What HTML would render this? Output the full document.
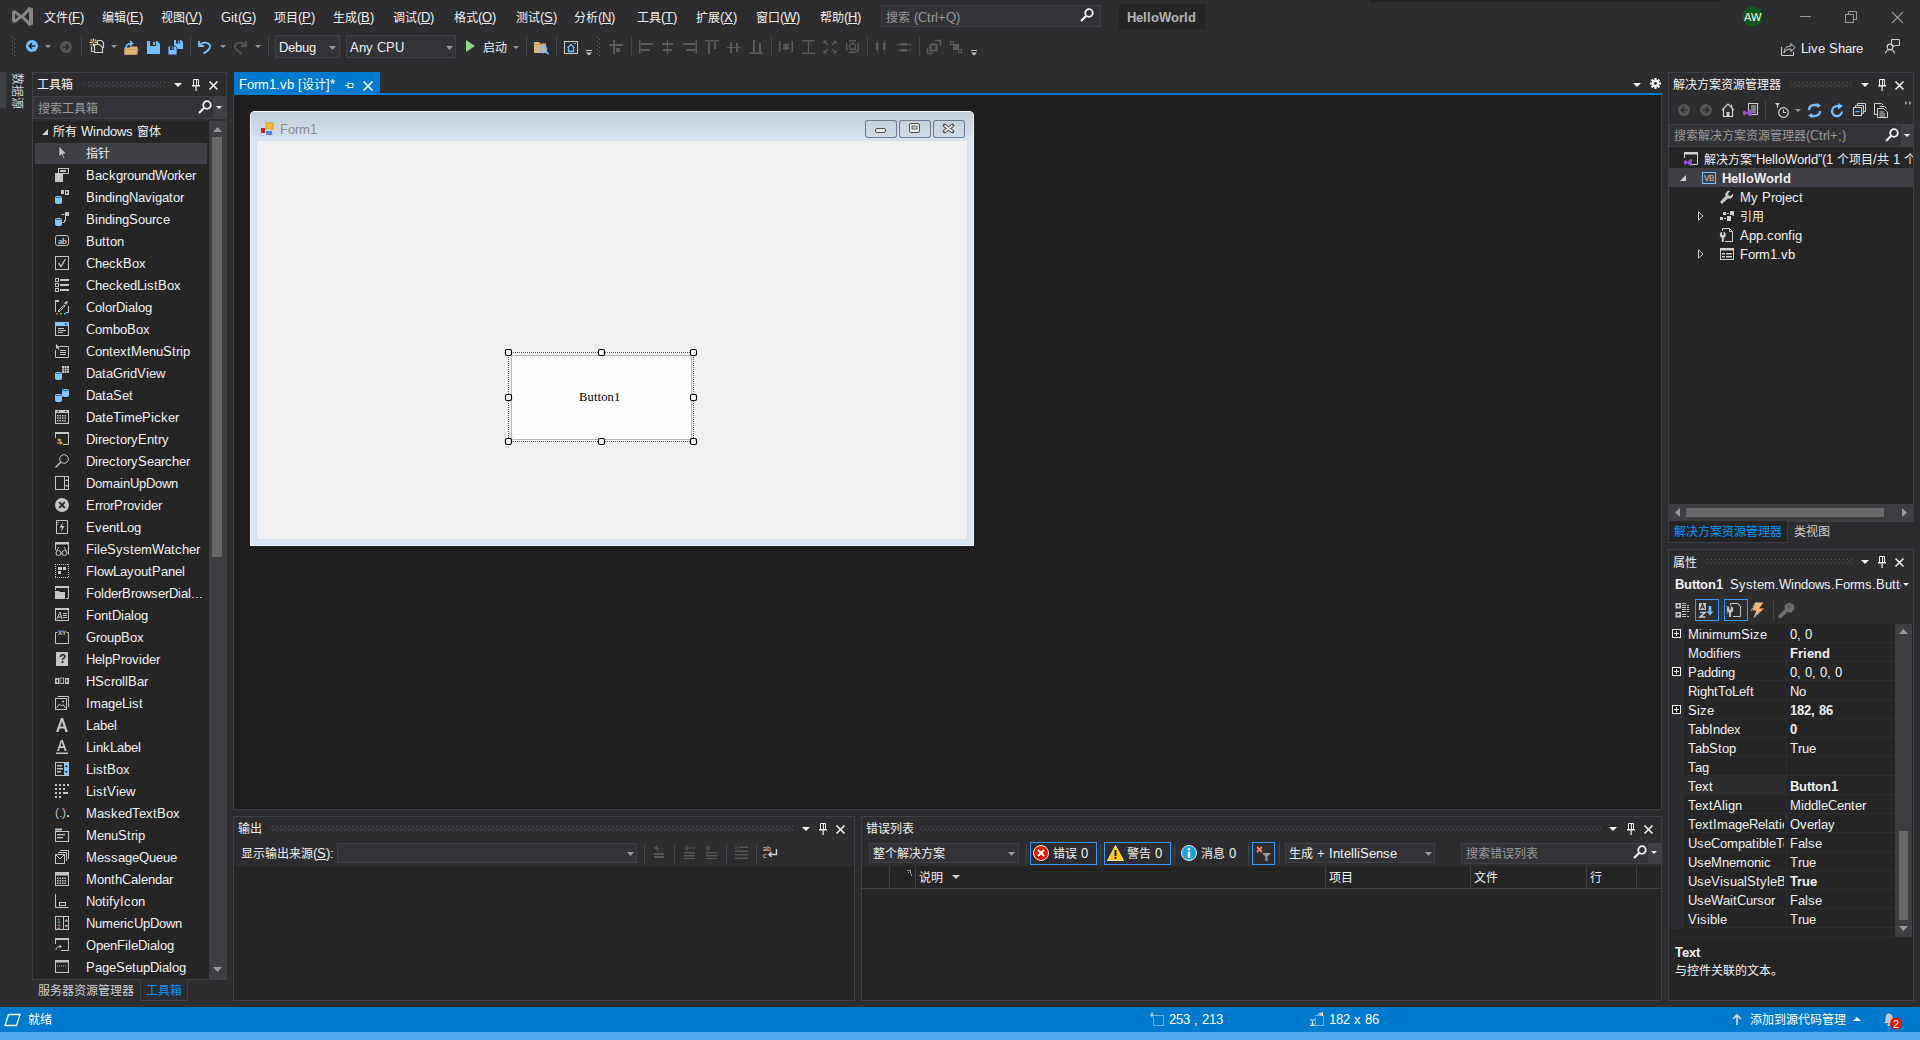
<!DOCTYPE html><html lang="zh-CN"><head><meta charset="utf-8"><style>
@font-face{font-family:"Liberation Sans";src:local("Liberation Sans"),local("LiberationSans");size-adjust:107%}
@font-face{font-family:"Liberation Sans";src:local("Liberation Sans Bold"),local("LiberationSans-Bold");font-weight:700;size-adjust:107%}
html,body{margin:0;padding:0;width:1920px;height:1040px;overflow:hidden;background:#2d2d30}
body{position:relative;font-family:"Liberation Sans",sans-serif;font-size:12px;color:#f1f1f1}
.a{position:absolute}
.t{position:absolute;white-space:pre;line-height:16px}
svg{overflow:visible}
</style></head><body><svg class="a" style="left:12px;top:6px;" width="21" height="21" viewBox="0 0 21 21"><path d="M0 5.5 L3 4 L9.5 9 L17 1 L21 2.5 L21 18.5 L17 20 L9.5 12 L3 17 L0 15.5 Z M3 7.5 L3 13.5 L6.5 10.5 Z M17 6 L12 10.5 L17 15 Z" fill="#868686" fill-rule="evenodd"/></svg>
<div class="t" style="left:44px;top:10px;color:#f1f1f1;">文件(<u>F</u>)</div>
<div class="t" style="left:102px;top:10px;color:#f1f1f1;">编辑(<u>E</u>)</div>
<div class="t" style="left:161px;top:10px;color:#f1f1f1;">视图(<u>V</u>)</div>
<div class="t" style="left:221px;top:10px;color:#f1f1f1;">Git(<u>G</u>)</div>
<div class="t" style="left:274px;top:10px;color:#f1f1f1;">项目(<u>P</u>)</div>
<div class="t" style="left:333px;top:10px;color:#f1f1f1;">生成(<u>B</u>)</div>
<div class="t" style="left:393px;top:10px;color:#f1f1f1;">调试(<u>D</u>)</div>
<div class="t" style="left:454px;top:10px;color:#f1f1f1;">格式(<u>O</u>)</div>
<div class="t" style="left:516px;top:10px;color:#f1f1f1;">测试(<u>S</u>)</div>
<div class="t" style="left:574px;top:10px;color:#f1f1f1;">分析(<u>N</u>)</div>
<div class="t" style="left:637px;top:10px;color:#f1f1f1;">工具(<u>T</u>)</div>
<div class="t" style="left:696px;top:10px;color:#f1f1f1;">扩展(<u>X</u>)</div>
<div class="t" style="left:756px;top:10px;color:#f1f1f1;">窗口(<u>W</u>)</div>
<div class="t" style="left:820px;top:10px;color:#f1f1f1;">帮助(<u>H</u>)</div>
<div class="a" style="left:881px;top:5px;width:220px;height:22px;background:#333337;box-shadow:inset 0 0 0 1px #3f3f46;"></div>
<div class="t" style="left:886px;top:10px;color:#999999;">搜索 (Ctrl+Q)</div>
<div class="a" style="left:1119px;top:4px;width:87px;height:26px;background:#252526;"></div>
<div class="t" style="left:1127px;top:10px;color:#b4b4b4;font-weight:700;">HelloWorld</div>
<svg class="a" style="left:1742px;top:6px;" width="21" height="21" viewBox="0 0 21 21"><circle cx="10.5" cy="10.5" r="10" fill="#0e5a1e"/><text x="10.5" y="15" font-family="Liberation Sans" font-size="10" fill="#fff" text-anchor="middle">AW</text></svg>
<svg class="a" style="left:1800px;top:16px;" width="11" height="1" viewBox="0 0 11 1"><rect width="11" height="1" fill="#999"/></svg>
<svg class="a" style="left:1845px;top:11px;" width="12" height="12" viewBox="0 0 12 12"><rect x="0.5" y="3.5" width="8" height="8" fill="none" stroke="#999"/><path d="M3.5 3.5 V0.5 H11.5 V8.5 H8.5" fill="none" stroke="#999"/></svg>
<svg class="a" style="left:1892px;top:12px;" width="11" height="11" viewBox="0 0 11 11"><path d="M0 0 L11 11 M11 0 L0 11" stroke="#999" stroke-width="1.1"/></svg>
<svg class="a" style="left:12px;top:37px;" width="4" height="20" viewBox="0 0 4 20"><rect x="0" y="0" width="1" height="1" fill="#6a6a6a"/><rect x="2" y="2" width="1" height="1" fill="#6a6a6a"/><rect x="0" y="4" width="1" height="1" fill="#6a6a6a"/><rect x="2" y="6" width="1" height="1" fill="#6a6a6a"/><rect x="0" y="8" width="1" height="1" fill="#6a6a6a"/><rect x="2" y="10" width="1" height="1" fill="#6a6a6a"/><rect x="0" y="12" width="1" height="1" fill="#6a6a6a"/><rect x="2" y="14" width="1" height="1" fill="#6a6a6a"/><rect x="0" y="16" width="1" height="1" fill="#6a6a6a"/><rect x="2" y="18" width="1" height="1" fill="#6a6a6a"/></svg>
<div class="a" style="left:275px;top:35px;width:65px;height:23px;background:#333337;box-shadow:inset 0 0 0 1px #3f3f46;"></div>
<div class="t" style="left:279px;top:40px;color:#f1f1f1;">Debug</div>
<svg class="a" style="left:329px;top:46px;" width="7" height="4" viewBox="0 0 7 4"><path d="M0 0H7L3.5 4Z" fill="#999"/></svg>
<div class="a" style="left:346px;top:35px;width:110px;height:23px;background:#333337;box-shadow:inset 0 0 0 1px #3f3f46;"></div>
<div class="t" style="left:350px;top:40px;color:#f1f1f1;">Any CPU</div>
<svg class="a" style="left:446px;top:46px;" width="7" height="4" viewBox="0 0 7 4"><path d="M0 0H7L3.5 4Z" fill="#999"/></svg>
<svg class="a" style="left:466px;top:40px;" width="9" height="12" viewBox="0 0 9 12"><path d="M0 0L9 6L0 12Z" fill="#8dd28a"/></svg>
<div class="t" style="left:483px;top:40px;color:#f1f1f1;">启动</div>
<svg class="a" style="left:513px;top:46px;" width="6" height="3" viewBox="0 0 6 3"><path d="M0 0H6L3 3Z" fill="#999"/></svg>
<div class="t" style="left:1801px;top:41px;color:#f1f1f1;">Live Share</div>
<div class="a" style="left:0px;top:72px;width:6px;height:36px;background:#3f3f46;"></div>
<div class="t" style="left:11px;top:73px;color:#d0d0d0;writing-mode:vertical-rl;text-orientation:sideways;line-height:12px">数据源</div>
<div class="a" style="left:32px;top:72px;width:195px;height:908px;box-shadow:inset 0 0 0 1px #3f3f46;"></div>
<div class="t" style="left:37px;top:77px;color:#f1f1f1;">工具箱</div>
<div class="a" style="left:33px;top:96px;width:193px;height:23px;background:#333337;box-shadow:inset 0 0 0 1px #3f3f46;"></div>
<div class="a" style="left:213px;top:97px;width:13px;height:21px;background:#3f3f46;"></div>
<div class="t" style="left:38px;top:101px;color:#999999;">搜索工具箱</div>
<div class="a" style="left:33px;top:121px;width:176px;height:858px;background:#252526;"></div>
<div class="a" style="left:209px;top:121px;width:17px;height:858px;background:#3e3e42;"></div>
<div class="a" style="left:212px;top:137px;width:10px;height:420px;background:#686868;"></div>
<div class="t" style="left:53px;top:124px;color:#f1f1f1;">所有 Windows 窗体</div>
<div class="a" style="left:35px;top:143px;width:172px;height:21px;background:#3f3f46;"></div>
<div class="t" style="left:86px;top:146px;color:#f1f1f1;">指针</div>
<div class="t" style="left:86px;top:168px;color:#f1f1f1;">BackgroundWorker</div>
<div class="t" style="left:86px;top:190px;color:#f1f1f1;">BindingNavigator</div>
<div class="t" style="left:86px;top:212px;color:#f1f1f1;">BindingSource</div>
<div class="t" style="left:86px;top:234px;color:#f1f1f1;">Button</div>
<div class="t" style="left:86px;top:256px;color:#f1f1f1;">CheckBox</div>
<div class="t" style="left:86px;top:278px;color:#f1f1f1;">CheckedListBox</div>
<div class="t" style="left:86px;top:300px;color:#f1f1f1;">ColorDialog</div>
<div class="t" style="left:86px;top:322px;color:#f1f1f1;">ComboBox</div>
<div class="t" style="left:86px;top:344px;color:#f1f1f1;">ContextMenuStrip</div>
<div class="t" style="left:86px;top:366px;color:#f1f1f1;">DataGridView</div>
<div class="t" style="left:86px;top:388px;color:#f1f1f1;">DataSet</div>
<div class="t" style="left:86px;top:410px;color:#f1f1f1;">DateTimePicker</div>
<div class="t" style="left:86px;top:432px;color:#f1f1f1;">DirectoryEntry</div>
<div class="t" style="left:86px;top:454px;color:#f1f1f1;">DirectorySearcher</div>
<div class="t" style="left:86px;top:476px;color:#f1f1f1;">DomainUpDown</div>
<div class="t" style="left:86px;top:498px;color:#f1f1f1;">ErrorProvider</div>
<div class="t" style="left:86px;top:520px;color:#f1f1f1;">EventLog</div>
<div class="t" style="left:86px;top:542px;color:#f1f1f1;">FileSystemWatcher</div>
<div class="t" style="left:86px;top:564px;color:#f1f1f1;">FlowLayoutPanel</div>
<div class="t" style="left:86px;top:586px;color:#f1f1f1;">FolderBrowserDial...</div>
<div class="t" style="left:86px;top:608px;color:#f1f1f1;">FontDialog</div>
<div class="t" style="left:86px;top:630px;color:#f1f1f1;">GroupBox</div>
<div class="t" style="left:86px;top:652px;color:#f1f1f1;">HelpProvider</div>
<div class="t" style="left:86px;top:674px;color:#f1f1f1;">HScrollBar</div>
<div class="t" style="left:86px;top:696px;color:#f1f1f1;">ImageList</div>
<div class="t" style="left:86px;top:718px;color:#f1f1f1;">Label</div>
<div class="t" style="left:86px;top:740px;color:#f1f1f1;">LinkLabel</div>
<div class="t" style="left:86px;top:762px;color:#f1f1f1;">ListBox</div>
<div class="t" style="left:86px;top:784px;color:#f1f1f1;">ListView</div>
<div class="t" style="left:86px;top:806px;color:#f1f1f1;">MaskedTextBox</div>
<div class="t" style="left:86px;top:828px;color:#f1f1f1;">MenuStrip</div>
<div class="t" style="left:86px;top:850px;color:#f1f1f1;">MessageQueue</div>
<div class="t" style="left:86px;top:872px;color:#f1f1f1;">MonthCalendar</div>
<div class="t" style="left:86px;top:894px;color:#f1f1f1;">NotifyIcon</div>
<div class="t" style="left:86px;top:916px;color:#f1f1f1;">NumericUpDown</div>
<div class="t" style="left:86px;top:938px;color:#f1f1f1;">OpenFileDialog</div>
<div class="t" style="left:86px;top:960px;color:#f1f1f1;">PageSetupDialog</div>
<div class="a" style="left:140px;top:979px;width:48px;height:22px;box-shadow:inset 0 0 0 1px #3f3f46;border-top:none"></div>
<div class="a" style="left:141px;top:979px;width:46px;height:21px;background:#2d2d30;"></div>
<div class="t" style="left:38px;top:983px;color:#d0d0d0;">服务器资源管理器</div>
<div class="t" style="left:146px;top:983px;color:#0097fb;">工具箱</div>
<div class="a" style="left:234px;top:72px;width:146px;height:23px;background:#007acc;"></div>
<div class="t" style="left:239px;top:77px;color:#ffffff;">Form1.vb [设计]*</div>
<div class="a" style="left:234px;top:93px;width:1428px;height:2px;background:#007acc;"></div>
<div class="a" style="left:233px;top:95px;width:1429px;height:715px;background:#3f3f46;"></div>
<div class="a" style="left:234px;top:95px;width:1427px;height:714px;background:#1e1e1e;"></div>
<div class="a" style="left:250px;top:111px;width:724px;height:435px;background:#d7e4f2;border-radius:5px 5px 0 0;box-shadow:inset 0 0 0 1px #f4f8fc;background:linear-gradient(#bfcddb,#d7e4f2 30px)"></div>
<div class="a" style="left:257px;top:141px;width:710px;height:398px;background:#f0f0f0;"></div>
<div class="t" style="left:280px;top:122px;color:#8b8b8b;">Form1</div>
<div class="a" style="left:865px;top:120px;width:32px;height:18px;box-shadow:inset 0 0 0 1px #6d7a90;border-radius:3px;background:linear-gradient(#c4d2e0,#d0dce8)"></div>
<div class="a" style="left:899px;top:120px;width:32px;height:18px;box-shadow:inset 0 0 0 1px #6d7a90;border-radius:3px;background:linear-gradient(#c4d2e0,#d0dce8)"></div>
<div class="a" style="left:933px;top:120px;width:32px;height:18px;box-shadow:inset 0 0 0 1px #6d7a90;border-radius:3px;background:linear-gradient(#c4d2e0,#d0dce8)"></div>
<div class="a" style="left:511px;top:355px;width:181px;height:85px;background:#fdfdfd;box-shadow:inset 0 0 0 1px #b9b9b9;border-radius:3px"></div>
<div class="t" style="left:579px;top:389px;color:#000;font-family:'Liberation Serif';font-size:12.5px;font-weight:400;letter-spacing:0.15px">Button1</div>
<div class="a" style="left:233px;top:816px;width:622px;height:185px;box-shadow:inset 0 0 0 1px #3f3f46;"></div>
<div class="t" style="left:238px;top:821px;color:#f1f1f1;">输出</div>
<div class="a" style="left:234px;top:839px;width:620px;height:1px;background:#2d2d30;"></div>
<div class="t" style="left:241px;top:846px;color:#f1f1f1;">显示输出来源(<u>S</u>):</div>
<div class="a" style="left:337px;top:843px;width:300px;height:20px;background:#333337;box-shadow:inset 0 0 0 1px #3f3f46;"></div>
<svg class="a" style="left:627px;top:852px;" width="7" height="4" viewBox="0 0 7 4"><path d="M0 0H7L3.5 4Z" fill="#999"/></svg>
<div class="a" style="left:234px;top:866px;width:620px;height:134px;background:#252526;"></div>
<div class="a" style="left:861px;top:816px;width:801px;height:185px;box-shadow:inset 0 0 0 1px #3f3f46;"></div>
<div class="t" style="left:866px;top:821px;color:#f1f1f1;">错误列表</div>
<div class="a" style="left:869px;top:843px;width:150px;height:20px;background:#333337;box-shadow:inset 0 0 0 1px #3f3f46;"></div>
<div class="t" style="left:873px;top:846px;color:#f1f1f1;">整个解决方案</div>
<svg class="a" style="left:1008px;top:852px;" width="7" height="4" viewBox="0 0 7 4"><path d="M0 0H7L3.5 4Z" fill="#999"/></svg>
<div class="a" style="left:1030px;top:842px;width:67px;height:23px;box-shadow:inset 0 0 0 1px #3399ff;"></div>
<div class="t" style="left:1053px;top:846px;color:#f1f1f1;">错误 0</div>
<div class="a" style="left:1104px;top:842px;width:67px;height:23px;box-shadow:inset 0 0 0 1px #3399ff;"></div>
<div class="t" style="left:1127px;top:846px;color:#f1f1f1;">警告 0</div>
<div class="t" style="left:1201px;top:846px;color:#f1f1f1;">消息 0</div>
<div class="a" style="left:1252px;top:842px;width:23px;height:23px;box-shadow:inset 0 0 0 1px #3399ff;"></div>
<div class="a" style="left:1285px;top:843px;width:150px;height:20px;background:#333337;box-shadow:inset 0 0 0 1px #3f3f46;"></div>
<div class="t" style="left:1289px;top:846px;color:#f1f1f1;">生成 + IntelliSense</div>
<svg class="a" style="left:1425px;top:852px;" width="7" height="4" viewBox="0 0 7 4"><path d="M0 0H7L3.5 4Z" fill="#999"/></svg>
<div class="a" style="left:1461px;top:843px;width:188px;height:21px;background:#333337;box-shadow:inset 0 0 0 1px #3f3f46;"></div>
<div class="a" style="left:1649px;top:843px;width:12px;height:21px;background:#3f3f46;"></div>
<div class="t" style="left:1466px;top:846px;color:#999999;">搜索错误列表</div>
<div class="a" style="left:862px;top:866px;width:799px;height:22px;background:#252526;"></div>
<div class="a" style="left:862px;top:888px;width:799px;height:1px;background:#3f3f46;"></div>
<div class="a" style="left:862px;top:889px;width:799px;height:111px;background:#252526;"></div>
<div class="a" style="left:889px;top:866px;width:1px;height:22px;background:#3f3f46;"></div>
<div class="a" style="left:915px;top:866px;width:1px;height:22px;background:#3f3f46;"></div>
<div class="a" style="left:1325px;top:866px;width:1px;height:22px;background:#3f3f46;"></div>
<div class="a" style="left:1470px;top:866px;width:1px;height:22px;background:#3f3f46;"></div>
<div class="a" style="left:1586px;top:866px;width:1px;height:22px;background:#3f3f46;"></div>
<div class="a" style="left:1636px;top:866px;width:1px;height:22px;background:#3f3f46;"></div>
<div class="t" style="left:919px;top:870px;color:#f1f1f1;">说明</div>
<div class="t" style="left:1329px;top:870px;color:#f1f1f1;">项目</div>
<div class="t" style="left:1474px;top:870px;color:#f1f1f1;">文件</div>
<div class="t" style="left:1590px;top:870px;color:#f1f1f1;">行</div>
<div class="a" style="left:1668px;top:72px;width:246px;height:450px;box-shadow:inset 0 0 0 1px #3f3f46;"></div>
<div class="t" style="left:1673px;top:77px;color:#f1f1f1;">解决方案资源管理器</div>
<div class="a" style="left:1669px;top:124px;width:245px;height:23px;background:#333337;box-shadow:inset 0 0 0 1px #3f3f46;"></div>
<div class="a" style="left:1901px;top:125px;width:12px;height:21px;background:#3f3f46;"></div>
<div class="t" style="left:1674px;top:128px;color:#999999;">搜索解决方案资源管理器(Ctrl+;)</div>
<div class="a" style="left:1669px;top:147px;width:244px;height:357px;background:#252526;"></div>
<div class="a" style="left:1669px;top:168px;width:244px;height:19px;background:#3f3f46;"></div>
<div class="t" style="left:1704px;top:152px;color:#f1f1f1;width:209px;overflow:hidden">解决方案“HelloWorld”(1 个项目/共 1 个)</div>
<div class="t" style="left:1722px;top:171px;color:#f1f1f1;font-weight:700;">HelloWorld</div>
<div class="t" style="left:1740px;top:190px;color:#f1f1f1;">My Project</div>
<div class="t" style="left:1740px;top:209px;color:#f1f1f1;">引用</div>
<div class="t" style="left:1740px;top:228px;color:#f1f1f1;">App.config</div>
<div class="t" style="left:1740px;top:247px;color:#f1f1f1;">Form1.vb</div>
<div class="a" style="left:1669px;top:504px;width:244px;height:17px;background:#3e3e42;"></div>
<div class="a" style="left:1686px;top:508px;width:198px;height:9px;background:#686868;"></div>
<div class="a" style="left:1668px;top:521px;width:120px;height:22px;background:#252526;box-shadow:inset 0 0 0 1px #3f3f46;"></div>
<div class="a" style="left:1669px;top:521px;width:118px;height:1px;background:#252526;"></div>
<div class="t" style="left:1674px;top:524px;color:#0097fb;">解决方案资源管理器</div>
<div class="t" style="left:1794px;top:524px;color:#d0d0d0;">类视图</div>
<div class="a" style="left:1668px;top:549px;width:246px;height:452px;box-shadow:inset 0 0 0 1px #3f3f46;"></div>
<div class="t" style="left:1673px;top:555px;color:#f1f1f1;">属性</div>
<div class="a" style="left:1669px;top:574px;width:244px;height:23px;background:#2d2d30;"></div>
<div class="t" style="left:1675px;top:577px;color:#f1f1f1;font-weight:700;">Button1</div>
<div class="t" style="left:1730px;top:577px;color:#f1f1f1;width:171px;overflow:hidden">System.Windows.Forms.Buttc</div>
<div class="a" style="left:1669px;top:624px;width:244px;height:314px;background:#252526;"></div>
<div class="a" style="left:1895px;top:624px;width:17px;height:313px;background:#3e3e42;"></div>
<div class="a" style="left:1899px;top:831px;width:9px;height:89px;background:#686868;"></div>
<div class="a" style="left:1684px;top:642px;width:211px;height:1px;background:#2d2d30;"></div>
<div class="a" style="left:1786px;top:624px;width:1px;height:19px;background:#2d2d30;"></div>
<div class="t" style="left:1688px;top:627px;color:#f1f1f1;width:96px;overflow:hidden">MinimumSize</div>
<div class="t" style="left:1790px;top:627px;color:#f1f1f1;">0, 0</div>
<div class="a" style="left:1684px;top:661px;width:211px;height:1px;background:#2d2d30;"></div>
<div class="a" style="left:1786px;top:643px;width:1px;height:19px;background:#2d2d30;"></div>
<div class="t" style="left:1688px;top:646px;color:#f1f1f1;width:96px;overflow:hidden">Modifiers</div>
<div class="t" style="left:1790px;top:646px;color:#f1f1f1;font-weight:700;">Friend</div>
<div class="a" style="left:1684px;top:680px;width:211px;height:1px;background:#2d2d30;"></div>
<div class="a" style="left:1786px;top:662px;width:1px;height:19px;background:#2d2d30;"></div>
<div class="t" style="left:1688px;top:665px;color:#f1f1f1;width:96px;overflow:hidden">Padding</div>
<div class="t" style="left:1790px;top:665px;color:#f1f1f1;">0, 0, 0, 0</div>
<div class="a" style="left:1684px;top:699px;width:211px;height:1px;background:#2d2d30;"></div>
<div class="a" style="left:1786px;top:681px;width:1px;height:19px;background:#2d2d30;"></div>
<div class="t" style="left:1688px;top:684px;color:#f1f1f1;width:96px;overflow:hidden">RightToLeft</div>
<div class="t" style="left:1790px;top:684px;color:#f1f1f1;">No</div>
<div class="a" style="left:1684px;top:718px;width:211px;height:1px;background:#2d2d30;"></div>
<div class="a" style="left:1786px;top:700px;width:1px;height:19px;background:#2d2d30;"></div>
<div class="t" style="left:1688px;top:703px;color:#f1f1f1;width:96px;overflow:hidden">Size</div>
<div class="t" style="left:1790px;top:703px;color:#f1f1f1;font-weight:700;">182, 86</div>
<div class="a" style="left:1684px;top:737px;width:211px;height:1px;background:#2d2d30;"></div>
<div class="a" style="left:1786px;top:719px;width:1px;height:19px;background:#2d2d30;"></div>
<div class="t" style="left:1688px;top:722px;color:#f1f1f1;width:96px;overflow:hidden">TabIndex</div>
<div class="t" style="left:1790px;top:722px;color:#f1f1f1;font-weight:700;">0</div>
<div class="a" style="left:1684px;top:756px;width:211px;height:1px;background:#2d2d30;"></div>
<div class="a" style="left:1786px;top:738px;width:1px;height:19px;background:#2d2d30;"></div>
<div class="t" style="left:1688px;top:741px;color:#f1f1f1;width:96px;overflow:hidden">TabStop</div>
<div class="t" style="left:1790px;top:741px;color:#f1f1f1;">True</div>
<div class="a" style="left:1684px;top:775px;width:211px;height:1px;background:#2d2d30;"></div>
<div class="a" style="left:1786px;top:757px;width:1px;height:19px;background:#2d2d30;"></div>
<div class="t" style="left:1688px;top:760px;color:#f1f1f1;width:96px;overflow:hidden">Tag</div>
<div class="t" style="left:1790px;top:760px;color:#f1f1f1;"></div>
<div class="a" style="left:1684px;top:794px;width:211px;height:1px;background:#2d2d30;"></div>
<div class="a" style="left:1684px;top:776px;width:102px;height:18px;background:#2d2d30;"></div>
<div class="a" style="left:1786px;top:776px;width:1px;height:19px;background:#2d2d30;"></div>
<div class="t" style="left:1688px;top:779px;color:#f1f1f1;width:96px;overflow:hidden">Text</div>
<div class="t" style="left:1790px;top:779px;color:#f1f1f1;font-weight:700;">Button1</div>
<div class="a" style="left:1684px;top:813px;width:211px;height:1px;background:#2d2d30;"></div>
<div class="a" style="left:1786px;top:795px;width:1px;height:19px;background:#2d2d30;"></div>
<div class="t" style="left:1688px;top:798px;color:#f1f1f1;width:96px;overflow:hidden">TextAlign</div>
<div class="t" style="left:1790px;top:798px;color:#f1f1f1;">MiddleCenter</div>
<div class="a" style="left:1684px;top:832px;width:211px;height:1px;background:#2d2d30;"></div>
<div class="a" style="left:1786px;top:814px;width:1px;height:19px;background:#2d2d30;"></div>
<div class="t" style="left:1688px;top:817px;color:#f1f1f1;width:96px;overflow:hidden">TextImageRelation</div>
<div class="t" style="left:1790px;top:817px;color:#f1f1f1;">Overlay</div>
<div class="a" style="left:1684px;top:851px;width:211px;height:1px;background:#2d2d30;"></div>
<div class="a" style="left:1786px;top:833px;width:1px;height:19px;background:#2d2d30;"></div>
<div class="t" style="left:1688px;top:836px;color:#f1f1f1;width:96px;overflow:hidden">UseCompatibleTextRendering</div>
<div class="t" style="left:1790px;top:836px;color:#f1f1f1;">False</div>
<div class="a" style="left:1684px;top:870px;width:211px;height:1px;background:#2d2d30;"></div>
<div class="a" style="left:1786px;top:852px;width:1px;height:19px;background:#2d2d30;"></div>
<div class="t" style="left:1688px;top:855px;color:#f1f1f1;width:96px;overflow:hidden">UseMnemonic</div>
<div class="t" style="left:1790px;top:855px;color:#f1f1f1;">True</div>
<div class="a" style="left:1684px;top:889px;width:211px;height:1px;background:#2d2d30;"></div>
<div class="a" style="left:1786px;top:871px;width:1px;height:19px;background:#2d2d30;"></div>
<div class="t" style="left:1688px;top:874px;color:#f1f1f1;width:96px;overflow:hidden">UseVisualStyleBackColor</div>
<div class="t" style="left:1790px;top:874px;color:#f1f1f1;font-weight:700;">True</div>
<div class="a" style="left:1684px;top:908px;width:211px;height:1px;background:#2d2d30;"></div>
<div class="a" style="left:1786px;top:890px;width:1px;height:19px;background:#2d2d30;"></div>
<div class="t" style="left:1688px;top:893px;color:#f1f1f1;width:96px;overflow:hidden">UseWaitCursor</div>
<div class="t" style="left:1790px;top:893px;color:#f1f1f1;">False</div>
<div class="a" style="left:1684px;top:927px;width:211px;height:1px;background:#2d2d30;"></div>
<div class="a" style="left:1786px;top:909px;width:1px;height:19px;background:#2d2d30;"></div>
<div class="t" style="left:1688px;top:912px;color:#f1f1f1;width:96px;overflow:hidden">Visible</div>
<div class="t" style="left:1790px;top:912px;color:#f1f1f1;">True</div>
<div class="a" style="left:1669px;top:937px;width:244px;height:1px;background:#2d2d30;"></div>
<div class="a" style="left:1669px;top:938px;width:244px;height:62px;background:#252526;"></div>
<div class="t" style="left:1675px;top:945px;color:#f1f1f1;font-weight:700;">Text</div>
<div class="t" style="left:1675px;top:963px;color:#f1f1f1;">与控件关联的文本。</div>
<div class="a" style="left:1370px;top:0px;width:350px;height:3px;background:linear-gradient(rgba(0,0,0,.35),rgba(0,0,0,0))"></div>
<div class="a" style="left:0px;top:1007px;width:1920px;height:25px;background:#007acc;"></div>
<div class="a" style="left:0px;top:1032px;width:1920px;height:8px;background:#4ea9ef;"></div>
<div class="t" style="left:28px;top:1012px;color:#fff;">就绪</div>
<div class="t" style="left:1169px;top:1012px;color:#fff;">253 , 213</div>
<div class="t" style="left:1329px;top:1012px;color:#fff;">182 x 86</div>
<div class="t" style="left:1750px;top:1012px;color:#fff;">添加到源代码管理</div>
<svg class="a" style="left:82px;top:82px;" width="84" height="5" viewBox="0 0 84 5"><rect x="2" y="0" width="1" height="1" fill="#5a5a5e"/><rect x="6" y="0" width="1" height="1" fill="#5a5a5e"/><rect x="10" y="0" width="1" height="1" fill="#5a5a5e"/><rect x="14" y="0" width="1" height="1" fill="#5a5a5e"/><rect x="18" y="0" width="1" height="1" fill="#5a5a5e"/><rect x="22" y="0" width="1" height="1" fill="#5a5a5e"/><rect x="26" y="0" width="1" height="1" fill="#5a5a5e"/><rect x="30" y="0" width="1" height="1" fill="#5a5a5e"/><rect x="34" y="0" width="1" height="1" fill="#5a5a5e"/><rect x="38" y="0" width="1" height="1" fill="#5a5a5e"/><rect x="42" y="0" width="1" height="1" fill="#5a5a5e"/><rect x="46" y="0" width="1" height="1" fill="#5a5a5e"/><rect x="50" y="0" width="1" height="1" fill="#5a5a5e"/><rect x="54" y="0" width="1" height="1" fill="#5a5a5e"/><rect x="58" y="0" width="1" height="1" fill="#5a5a5e"/><rect x="62" y="0" width="1" height="1" fill="#5a5a5e"/><rect x="66" y="0" width="1" height="1" fill="#5a5a5e"/><rect x="70" y="0" width="1" height="1" fill="#5a5a5e"/><rect x="74" y="0" width="1" height="1" fill="#5a5a5e"/><rect x="78" y="0" width="1" height="1" fill="#5a5a5e"/><rect x="82" y="0" width="1" height="1" fill="#5a5a5e"/><rect x="0" y="2" width="1" height="1" fill="#5a5a5e"/><rect x="4" y="2" width="1" height="1" fill="#5a5a5e"/><rect x="8" y="2" width="1" height="1" fill="#5a5a5e"/><rect x="12" y="2" width="1" height="1" fill="#5a5a5e"/><rect x="16" y="2" width="1" height="1" fill="#5a5a5e"/><rect x="20" y="2" width="1" height="1" fill="#5a5a5e"/><rect x="24" y="2" width="1" height="1" fill="#5a5a5e"/><rect x="28" y="2" width="1" height="1" fill="#5a5a5e"/><rect x="32" y="2" width="1" height="1" fill="#5a5a5e"/><rect x="36" y="2" width="1" height="1" fill="#5a5a5e"/><rect x="40" y="2" width="1" height="1" fill="#5a5a5e"/><rect x="44" y="2" width="1" height="1" fill="#5a5a5e"/><rect x="48" y="2" width="1" height="1" fill="#5a5a5e"/><rect x="52" y="2" width="1" height="1" fill="#5a5a5e"/><rect x="56" y="2" width="1" height="1" fill="#5a5a5e"/><rect x="60" y="2" width="1" height="1" fill="#5a5a5e"/><rect x="64" y="2" width="1" height="1" fill="#5a5a5e"/><rect x="68" y="2" width="1" height="1" fill="#5a5a5e"/><rect x="72" y="2" width="1" height="1" fill="#5a5a5e"/><rect x="76" y="2" width="1" height="1" fill="#5a5a5e"/><rect x="80" y="2" width="1" height="1" fill="#5a5a5e"/><rect x="2" y="4" width="1" height="1" fill="#5a5a5e"/><rect x="6" y="4" width="1" height="1" fill="#5a5a5e"/><rect x="10" y="4" width="1" height="1" fill="#5a5a5e"/><rect x="14" y="4" width="1" height="1" fill="#5a5a5e"/><rect x="18" y="4" width="1" height="1" fill="#5a5a5e"/><rect x="22" y="4" width="1" height="1" fill="#5a5a5e"/><rect x="26" y="4" width="1" height="1" fill="#5a5a5e"/><rect x="30" y="4" width="1" height="1" fill="#5a5a5e"/><rect x="34" y="4" width="1" height="1" fill="#5a5a5e"/><rect x="38" y="4" width="1" height="1" fill="#5a5a5e"/><rect x="42" y="4" width="1" height="1" fill="#5a5a5e"/><rect x="46" y="4" width="1" height="1" fill="#5a5a5e"/><rect x="50" y="4" width="1" height="1" fill="#5a5a5e"/><rect x="54" y="4" width="1" height="1" fill="#5a5a5e"/><rect x="58" y="4" width="1" height="1" fill="#5a5a5e"/><rect x="62" y="4" width="1" height="1" fill="#5a5a5e"/><rect x="66" y="4" width="1" height="1" fill="#5a5a5e"/><rect x="70" y="4" width="1" height="1" fill="#5a5a5e"/><rect x="74" y="4" width="1" height="1" fill="#5a5a5e"/><rect x="78" y="4" width="1" height="1" fill="#5a5a5e"/><rect x="82" y="4" width="1" height="1" fill="#5a5a5e"/></svg>
<svg class="a" style="left:174px;top:83px;" width="8" height="4" viewBox="0 0 8 4"><path d="M0 0H8L4.0 4.0Z" fill="#f1f1f1"/></svg>
<svg class="a" style="left:192px;top:79px;" width="8" height="12" viewBox="0 0 8 12"><path d="M1.5 0.5H6.5V6.5H1.5Z" fill="none" stroke="#f1f1f1"/><rect x="4" y="1" width="1" height="6" fill="#f1f1f1"/><rect x="0" y="6" width="8" height="1.5" fill="#f1f1f1"/><rect x="3.5" y="7" width="1.2" height="5" fill="#f1f1f1"/></svg>
<svg class="a" style="left:209px;top:81px;" width="9" height="9" viewBox="0 0 9 9"><path d="M0.5 0.5L8.5 8.5M8.5 0.5L0.5 8.5" stroke="#f1f1f1" stroke-width="1.6"/></svg>
<svg class="a" style="left:1789px;top:82px;" width="64" height="5" viewBox="0 0 64 5"><rect x="2" y="0" width="1" height="1" fill="#5a5a5e"/><rect x="6" y="0" width="1" height="1" fill="#5a5a5e"/><rect x="10" y="0" width="1" height="1" fill="#5a5a5e"/><rect x="14" y="0" width="1" height="1" fill="#5a5a5e"/><rect x="18" y="0" width="1" height="1" fill="#5a5a5e"/><rect x="22" y="0" width="1" height="1" fill="#5a5a5e"/><rect x="26" y="0" width="1" height="1" fill="#5a5a5e"/><rect x="30" y="0" width="1" height="1" fill="#5a5a5e"/><rect x="34" y="0" width="1" height="1" fill="#5a5a5e"/><rect x="38" y="0" width="1" height="1" fill="#5a5a5e"/><rect x="42" y="0" width="1" height="1" fill="#5a5a5e"/><rect x="46" y="0" width="1" height="1" fill="#5a5a5e"/><rect x="50" y="0" width="1" height="1" fill="#5a5a5e"/><rect x="54" y="0" width="1" height="1" fill="#5a5a5e"/><rect x="58" y="0" width="1" height="1" fill="#5a5a5e"/><rect x="62" y="0" width="1" height="1" fill="#5a5a5e"/><rect x="0" y="2" width="1" height="1" fill="#5a5a5e"/><rect x="4" y="2" width="1" height="1" fill="#5a5a5e"/><rect x="8" y="2" width="1" height="1" fill="#5a5a5e"/><rect x="12" y="2" width="1" height="1" fill="#5a5a5e"/><rect x="16" y="2" width="1" height="1" fill="#5a5a5e"/><rect x="20" y="2" width="1" height="1" fill="#5a5a5e"/><rect x="24" y="2" width="1" height="1" fill="#5a5a5e"/><rect x="28" y="2" width="1" height="1" fill="#5a5a5e"/><rect x="32" y="2" width="1" height="1" fill="#5a5a5e"/><rect x="36" y="2" width="1" height="1" fill="#5a5a5e"/><rect x="40" y="2" width="1" height="1" fill="#5a5a5e"/><rect x="44" y="2" width="1" height="1" fill="#5a5a5e"/><rect x="48" y="2" width="1" height="1" fill="#5a5a5e"/><rect x="52" y="2" width="1" height="1" fill="#5a5a5e"/><rect x="56" y="2" width="1" height="1" fill="#5a5a5e"/><rect x="60" y="2" width="1" height="1" fill="#5a5a5e"/><rect x="2" y="4" width="1" height="1" fill="#5a5a5e"/><rect x="6" y="4" width="1" height="1" fill="#5a5a5e"/><rect x="10" y="4" width="1" height="1" fill="#5a5a5e"/><rect x="14" y="4" width="1" height="1" fill="#5a5a5e"/><rect x="18" y="4" width="1" height="1" fill="#5a5a5e"/><rect x="22" y="4" width="1" height="1" fill="#5a5a5e"/><rect x="26" y="4" width="1" height="1" fill="#5a5a5e"/><rect x="30" y="4" width="1" height="1" fill="#5a5a5e"/><rect x="34" y="4" width="1" height="1" fill="#5a5a5e"/><rect x="38" y="4" width="1" height="1" fill="#5a5a5e"/><rect x="42" y="4" width="1" height="1" fill="#5a5a5e"/><rect x="46" y="4" width="1" height="1" fill="#5a5a5e"/><rect x="50" y="4" width="1" height="1" fill="#5a5a5e"/><rect x="54" y="4" width="1" height="1" fill="#5a5a5e"/><rect x="58" y="4" width="1" height="1" fill="#5a5a5e"/><rect x="62" y="4" width="1" height="1" fill="#5a5a5e"/></svg>
<svg class="a" style="left:1861px;top:83px;" width="8" height="4" viewBox="0 0 8 4"><path d="M0 0H8L4.0 4.0Z" fill="#f1f1f1"/></svg>
<svg class="a" style="left:1878px;top:79px;" width="8" height="12" viewBox="0 0 8 12"><path d="M1.5 0.5H6.5V6.5H1.5Z" fill="none" stroke="#f1f1f1"/><rect x="4" y="1" width="1" height="6" fill="#f1f1f1"/><rect x="0" y="6" width="8" height="1.5" fill="#f1f1f1"/><rect x="3.5" y="7" width="1.2" height="5" fill="#f1f1f1"/></svg>
<svg class="a" style="left:1895px;top:81px;" width="9" height="9" viewBox="0 0 9 9"><path d="M0.5 0.5L8.5 8.5M8.5 0.5L0.5 8.5" stroke="#f1f1f1" stroke-width="1.6"/></svg>
<svg class="a" style="left:1705px;top:559px;" width="148" height="5" viewBox="0 0 148 5"><rect x="2" y="0" width="1" height="1" fill="#5a5a5e"/><rect x="6" y="0" width="1" height="1" fill="#5a5a5e"/><rect x="10" y="0" width="1" height="1" fill="#5a5a5e"/><rect x="14" y="0" width="1" height="1" fill="#5a5a5e"/><rect x="18" y="0" width="1" height="1" fill="#5a5a5e"/><rect x="22" y="0" width="1" height="1" fill="#5a5a5e"/><rect x="26" y="0" width="1" height="1" fill="#5a5a5e"/><rect x="30" y="0" width="1" height="1" fill="#5a5a5e"/><rect x="34" y="0" width="1" height="1" fill="#5a5a5e"/><rect x="38" y="0" width="1" height="1" fill="#5a5a5e"/><rect x="42" y="0" width="1" height="1" fill="#5a5a5e"/><rect x="46" y="0" width="1" height="1" fill="#5a5a5e"/><rect x="50" y="0" width="1" height="1" fill="#5a5a5e"/><rect x="54" y="0" width="1" height="1" fill="#5a5a5e"/><rect x="58" y="0" width="1" height="1" fill="#5a5a5e"/><rect x="62" y="0" width="1" height="1" fill="#5a5a5e"/><rect x="66" y="0" width="1" height="1" fill="#5a5a5e"/><rect x="70" y="0" width="1" height="1" fill="#5a5a5e"/><rect x="74" y="0" width="1" height="1" fill="#5a5a5e"/><rect x="78" y="0" width="1" height="1" fill="#5a5a5e"/><rect x="82" y="0" width="1" height="1" fill="#5a5a5e"/><rect x="86" y="0" width="1" height="1" fill="#5a5a5e"/><rect x="90" y="0" width="1" height="1" fill="#5a5a5e"/><rect x="94" y="0" width="1" height="1" fill="#5a5a5e"/><rect x="98" y="0" width="1" height="1" fill="#5a5a5e"/><rect x="102" y="0" width="1" height="1" fill="#5a5a5e"/><rect x="106" y="0" width="1" height="1" fill="#5a5a5e"/><rect x="110" y="0" width="1" height="1" fill="#5a5a5e"/><rect x="114" y="0" width="1" height="1" fill="#5a5a5e"/><rect x="118" y="0" width="1" height="1" fill="#5a5a5e"/><rect x="122" y="0" width="1" height="1" fill="#5a5a5e"/><rect x="126" y="0" width="1" height="1" fill="#5a5a5e"/><rect x="130" y="0" width="1" height="1" fill="#5a5a5e"/><rect x="134" y="0" width="1" height="1" fill="#5a5a5e"/><rect x="138" y="0" width="1" height="1" fill="#5a5a5e"/><rect x="142" y="0" width="1" height="1" fill="#5a5a5e"/><rect x="146" y="0" width="1" height="1" fill="#5a5a5e"/><rect x="0" y="2" width="1" height="1" fill="#5a5a5e"/><rect x="4" y="2" width="1" height="1" fill="#5a5a5e"/><rect x="8" y="2" width="1" height="1" fill="#5a5a5e"/><rect x="12" y="2" width="1" height="1" fill="#5a5a5e"/><rect x="16" y="2" width="1" height="1" fill="#5a5a5e"/><rect x="20" y="2" width="1" height="1" fill="#5a5a5e"/><rect x="24" y="2" width="1" height="1" fill="#5a5a5e"/><rect x="28" y="2" width="1" height="1" fill="#5a5a5e"/><rect x="32" y="2" width="1" height="1" fill="#5a5a5e"/><rect x="36" y="2" width="1" height="1" fill="#5a5a5e"/><rect x="40" y="2" width="1" height="1" fill="#5a5a5e"/><rect x="44" y="2" width="1" height="1" fill="#5a5a5e"/><rect x="48" y="2" width="1" height="1" fill="#5a5a5e"/><rect x="52" y="2" width="1" height="1" fill="#5a5a5e"/><rect x="56" y="2" width="1" height="1" fill="#5a5a5e"/><rect x="60" y="2" width="1" height="1" fill="#5a5a5e"/><rect x="64" y="2" width="1" height="1" fill="#5a5a5e"/><rect x="68" y="2" width="1" height="1" fill="#5a5a5e"/><rect x="72" y="2" width="1" height="1" fill="#5a5a5e"/><rect x="76" y="2" width="1" height="1" fill="#5a5a5e"/><rect x="80" y="2" width="1" height="1" fill="#5a5a5e"/><rect x="84" y="2" width="1" height="1" fill="#5a5a5e"/><rect x="88" y="2" width="1" height="1" fill="#5a5a5e"/><rect x="92" y="2" width="1" height="1" fill="#5a5a5e"/><rect x="96" y="2" width="1" height="1" fill="#5a5a5e"/><rect x="100" y="2" width="1" height="1" fill="#5a5a5e"/><rect x="104" y="2" width="1" height="1" fill="#5a5a5e"/><rect x="108" y="2" width="1" height="1" fill="#5a5a5e"/><rect x="112" y="2" width="1" height="1" fill="#5a5a5e"/><rect x="116" y="2" width="1" height="1" fill="#5a5a5e"/><rect x="120" y="2" width="1" height="1" fill="#5a5a5e"/><rect x="124" y="2" width="1" height="1" fill="#5a5a5e"/><rect x="128" y="2" width="1" height="1" fill="#5a5a5e"/><rect x="132" y="2" width="1" height="1" fill="#5a5a5e"/><rect x="136" y="2" width="1" height="1" fill="#5a5a5e"/><rect x="140" y="2" width="1" height="1" fill="#5a5a5e"/><rect x="144" y="2" width="1" height="1" fill="#5a5a5e"/><rect x="2" y="4" width="1" height="1" fill="#5a5a5e"/><rect x="6" y="4" width="1" height="1" fill="#5a5a5e"/><rect x="10" y="4" width="1" height="1" fill="#5a5a5e"/><rect x="14" y="4" width="1" height="1" fill="#5a5a5e"/><rect x="18" y="4" width="1" height="1" fill="#5a5a5e"/><rect x="22" y="4" width="1" height="1" fill="#5a5a5e"/><rect x="26" y="4" width="1" height="1" fill="#5a5a5e"/><rect x="30" y="4" width="1" height="1" fill="#5a5a5e"/><rect x="34" y="4" width="1" height="1" fill="#5a5a5e"/><rect x="38" y="4" width="1" height="1" fill="#5a5a5e"/><rect x="42" y="4" width="1" height="1" fill="#5a5a5e"/><rect x="46" y="4" width="1" height="1" fill="#5a5a5e"/><rect x="50" y="4" width="1" height="1" fill="#5a5a5e"/><rect x="54" y="4" width="1" height="1" fill="#5a5a5e"/><rect x="58" y="4" width="1" height="1" fill="#5a5a5e"/><rect x="62" y="4" width="1" height="1" fill="#5a5a5e"/><rect x="66" y="4" width="1" height="1" fill="#5a5a5e"/><rect x="70" y="4" width="1" height="1" fill="#5a5a5e"/><rect x="74" y="4" width="1" height="1" fill="#5a5a5e"/><rect x="78" y="4" width="1" height="1" fill="#5a5a5e"/><rect x="82" y="4" width="1" height="1" fill="#5a5a5e"/><rect x="86" y="4" width="1" height="1" fill="#5a5a5e"/><rect x="90" y="4" width="1" height="1" fill="#5a5a5e"/><rect x="94" y="4" width="1" height="1" fill="#5a5a5e"/><rect x="98" y="4" width="1" height="1" fill="#5a5a5e"/><rect x="102" y="4" width="1" height="1" fill="#5a5a5e"/><rect x="106" y="4" width="1" height="1" fill="#5a5a5e"/><rect x="110" y="4" width="1" height="1" fill="#5a5a5e"/><rect x="114" y="4" width="1" height="1" fill="#5a5a5e"/><rect x="118" y="4" width="1" height="1" fill="#5a5a5e"/><rect x="122" y="4" width="1" height="1" fill="#5a5a5e"/><rect x="126" y="4" width="1" height="1" fill="#5a5a5e"/><rect x="130" y="4" width="1" height="1" fill="#5a5a5e"/><rect x="134" y="4" width="1" height="1" fill="#5a5a5e"/><rect x="138" y="4" width="1" height="1" fill="#5a5a5e"/><rect x="142" y="4" width="1" height="1" fill="#5a5a5e"/><rect x="146" y="4" width="1" height="1" fill="#5a5a5e"/></svg>
<svg class="a" style="left:1861px;top:560px;" width="8" height="4" viewBox="0 0 8 4"><path d="M0 0H8L4.0 4.0Z" fill="#f1f1f1"/></svg>
<svg class="a" style="left:1878px;top:556px;" width="8" height="12" viewBox="0 0 8 12"><path d="M1.5 0.5H6.5V6.5H1.5Z" fill="none" stroke="#f1f1f1"/><rect x="4" y="1" width="1" height="6" fill="#f1f1f1"/><rect x="0" y="6" width="8" height="1.5" fill="#f1f1f1"/><rect x="3.5" y="7" width="1.2" height="5" fill="#f1f1f1"/></svg>
<svg class="a" style="left:1895px;top:558px;" width="9" height="9" viewBox="0 0 9 9"><path d="M0.5 0.5L8.5 8.5M8.5 0.5L0.5 8.5" stroke="#f1f1f1" stroke-width="1.6"/></svg>
<svg class="a" style="left:270px;top:826px;" width="524" height="5" viewBox="0 0 524 5"><rect x="2" y="0" width="1" height="1" fill="#5a5a5e"/><rect x="6" y="0" width="1" height="1" fill="#5a5a5e"/><rect x="10" y="0" width="1" height="1" fill="#5a5a5e"/><rect x="14" y="0" width="1" height="1" fill="#5a5a5e"/><rect x="18" y="0" width="1" height="1" fill="#5a5a5e"/><rect x="22" y="0" width="1" height="1" fill="#5a5a5e"/><rect x="26" y="0" width="1" height="1" fill="#5a5a5e"/><rect x="30" y="0" width="1" height="1" fill="#5a5a5e"/><rect x="34" y="0" width="1" height="1" fill="#5a5a5e"/><rect x="38" y="0" width="1" height="1" fill="#5a5a5e"/><rect x="42" y="0" width="1" height="1" fill="#5a5a5e"/><rect x="46" y="0" width="1" height="1" fill="#5a5a5e"/><rect x="50" y="0" width="1" height="1" fill="#5a5a5e"/><rect x="54" y="0" width="1" height="1" fill="#5a5a5e"/><rect x="58" y="0" width="1" height="1" fill="#5a5a5e"/><rect x="62" y="0" width="1" height="1" fill="#5a5a5e"/><rect x="66" y="0" width="1" height="1" fill="#5a5a5e"/><rect x="70" y="0" width="1" height="1" fill="#5a5a5e"/><rect x="74" y="0" width="1" height="1" fill="#5a5a5e"/><rect x="78" y="0" width="1" height="1" fill="#5a5a5e"/><rect x="82" y="0" width="1" height="1" fill="#5a5a5e"/><rect x="86" y="0" width="1" height="1" fill="#5a5a5e"/><rect x="90" y="0" width="1" height="1" fill="#5a5a5e"/><rect x="94" y="0" width="1" height="1" fill="#5a5a5e"/><rect x="98" y="0" width="1" height="1" fill="#5a5a5e"/><rect x="102" y="0" width="1" height="1" fill="#5a5a5e"/><rect x="106" y="0" width="1" height="1" fill="#5a5a5e"/><rect x="110" y="0" width="1" height="1" fill="#5a5a5e"/><rect x="114" y="0" width="1" height="1" fill="#5a5a5e"/><rect x="118" y="0" width="1" height="1" fill="#5a5a5e"/><rect x="122" y="0" width="1" height="1" fill="#5a5a5e"/><rect x="126" y="0" width="1" height="1" fill="#5a5a5e"/><rect x="130" y="0" width="1" height="1" fill="#5a5a5e"/><rect x="134" y="0" width="1" height="1" fill="#5a5a5e"/><rect x="138" y="0" width="1" height="1" fill="#5a5a5e"/><rect x="142" y="0" width="1" height="1" fill="#5a5a5e"/><rect x="146" y="0" width="1" height="1" fill="#5a5a5e"/><rect x="150" y="0" width="1" height="1" fill="#5a5a5e"/><rect x="154" y="0" width="1" height="1" fill="#5a5a5e"/><rect x="158" y="0" width="1" height="1" fill="#5a5a5e"/><rect x="162" y="0" width="1" height="1" fill="#5a5a5e"/><rect x="166" y="0" width="1" height="1" fill="#5a5a5e"/><rect x="170" y="0" width="1" height="1" fill="#5a5a5e"/><rect x="174" y="0" width="1" height="1" fill="#5a5a5e"/><rect x="178" y="0" width="1" height="1" fill="#5a5a5e"/><rect x="182" y="0" width="1" height="1" fill="#5a5a5e"/><rect x="186" y="0" width="1" height="1" fill="#5a5a5e"/><rect x="190" y="0" width="1" height="1" fill="#5a5a5e"/><rect x="194" y="0" width="1" height="1" fill="#5a5a5e"/><rect x="198" y="0" width="1" height="1" fill="#5a5a5e"/><rect x="202" y="0" width="1" height="1" fill="#5a5a5e"/><rect x="206" y="0" width="1" height="1" fill="#5a5a5e"/><rect x="210" y="0" width="1" height="1" fill="#5a5a5e"/><rect x="214" y="0" width="1" height="1" fill="#5a5a5e"/><rect x="218" y="0" width="1" height="1" fill="#5a5a5e"/><rect x="222" y="0" width="1" height="1" fill="#5a5a5e"/><rect x="226" y="0" width="1" height="1" fill="#5a5a5e"/><rect x="230" y="0" width="1" height="1" fill="#5a5a5e"/><rect x="234" y="0" width="1" height="1" fill="#5a5a5e"/><rect x="238" y="0" width="1" height="1" fill="#5a5a5e"/><rect x="242" y="0" width="1" height="1" fill="#5a5a5e"/><rect x="246" y="0" width="1" height="1" fill="#5a5a5e"/><rect x="250" y="0" width="1" height="1" fill="#5a5a5e"/><rect x="254" y="0" width="1" height="1" fill="#5a5a5e"/><rect x="258" y="0" width="1" height="1" fill="#5a5a5e"/><rect x="262" y="0" width="1" height="1" fill="#5a5a5e"/><rect x="266" y="0" width="1" height="1" fill="#5a5a5e"/><rect x="270" y="0" width="1" height="1" fill="#5a5a5e"/><rect x="274" y="0" width="1" height="1" fill="#5a5a5e"/><rect x="278" y="0" width="1" height="1" fill="#5a5a5e"/><rect x="282" y="0" width="1" height="1" fill="#5a5a5e"/><rect x="286" y="0" width="1" height="1" fill="#5a5a5e"/><rect x="290" y="0" width="1" height="1" fill="#5a5a5e"/><rect x="294" y="0" width="1" height="1" fill="#5a5a5e"/><rect x="298" y="0" width="1" height="1" fill="#5a5a5e"/><rect x="302" y="0" width="1" height="1" fill="#5a5a5e"/><rect x="306" y="0" width="1" height="1" fill="#5a5a5e"/><rect x="310" y="0" width="1" height="1" fill="#5a5a5e"/><rect x="314" y="0" width="1" height="1" fill="#5a5a5e"/><rect x="318" y="0" width="1" height="1" fill="#5a5a5e"/><rect x="322" y="0" width="1" height="1" fill="#5a5a5e"/><rect x="326" y="0" width="1" height="1" fill="#5a5a5e"/><rect x="330" y="0" width="1" height="1" fill="#5a5a5e"/><rect x="334" y="0" width="1" height="1" fill="#5a5a5e"/><rect x="338" y="0" width="1" height="1" fill="#5a5a5e"/><rect x="342" y="0" width="1" height="1" fill="#5a5a5e"/><rect x="346" y="0" width="1" height="1" fill="#5a5a5e"/><rect x="350" y="0" width="1" height="1" fill="#5a5a5e"/><rect x="354" y="0" width="1" height="1" fill="#5a5a5e"/><rect x="358" y="0" width="1" height="1" fill="#5a5a5e"/><rect x="362" y="0" width="1" height="1" fill="#5a5a5e"/><rect x="366" y="0" width="1" height="1" fill="#5a5a5e"/><rect x="370" y="0" width="1" height="1" fill="#5a5a5e"/><rect x="374" y="0" width="1" height="1" fill="#5a5a5e"/><rect x="378" y="0" width="1" height="1" fill="#5a5a5e"/><rect x="382" y="0" width="1" height="1" fill="#5a5a5e"/><rect x="386" y="0" width="1" height="1" fill="#5a5a5e"/><rect x="390" y="0" width="1" height="1" fill="#5a5a5e"/><rect x="394" y="0" width="1" height="1" fill="#5a5a5e"/><rect x="398" y="0" width="1" height="1" fill="#5a5a5e"/><rect x="402" y="0" width="1" height="1" fill="#5a5a5e"/><rect x="406" y="0" width="1" height="1" fill="#5a5a5e"/><rect x="410" y="0" width="1" height="1" fill="#5a5a5e"/><rect x="414" y="0" width="1" height="1" fill="#5a5a5e"/><rect x="418" y="0" width="1" height="1" fill="#5a5a5e"/><rect x="422" y="0" width="1" height="1" fill="#5a5a5e"/><rect x="426" y="0" width="1" height="1" fill="#5a5a5e"/><rect x="430" y="0" width="1" height="1" fill="#5a5a5e"/><rect x="434" y="0" width="1" height="1" fill="#5a5a5e"/><rect x="438" y="0" width="1" height="1" fill="#5a5a5e"/><rect x="442" y="0" width="1" height="1" fill="#5a5a5e"/><rect x="446" y="0" width="1" height="1" fill="#5a5a5e"/><rect x="450" y="0" width="1" height="1" fill="#5a5a5e"/><rect x="454" y="0" width="1" height="1" fill="#5a5a5e"/><rect x="458" y="0" width="1" height="1" fill="#5a5a5e"/><rect x="462" y="0" width="1" height="1" fill="#5a5a5e"/><rect x="466" y="0" width="1" height="1" fill="#5a5a5e"/><rect x="470" y="0" width="1" height="1" fill="#5a5a5e"/><rect x="474" y="0" width="1" height="1" fill="#5a5a5e"/><rect x="478" y="0" width="1" height="1" fill="#5a5a5e"/><rect x="482" y="0" width="1" height="1" fill="#5a5a5e"/><rect x="486" y="0" width="1" height="1" fill="#5a5a5e"/><rect x="490" y="0" width="1" height="1" fill="#5a5a5e"/><rect x="494" y="0" width="1" height="1" fill="#5a5a5e"/><rect x="498" y="0" width="1" height="1" fill="#5a5a5e"/><rect x="502" y="0" width="1" height="1" fill="#5a5a5e"/><rect x="506" y="0" width="1" height="1" fill="#5a5a5e"/><rect x="510" y="0" width="1" height="1" fill="#5a5a5e"/><rect x="514" y="0" width="1" height="1" fill="#5a5a5e"/><rect x="518" y="0" width="1" height="1" fill="#5a5a5e"/><rect x="522" y="0" width="1" height="1" fill="#5a5a5e"/><rect x="0" y="2" width="1" height="1" fill="#5a5a5e"/><rect x="4" y="2" width="1" height="1" fill="#5a5a5e"/><rect x="8" y="2" width="1" height="1" fill="#5a5a5e"/><rect x="12" y="2" width="1" height="1" fill="#5a5a5e"/><rect x="16" y="2" width="1" height="1" fill="#5a5a5e"/><rect x="20" y="2" width="1" height="1" fill="#5a5a5e"/><rect x="24" y="2" width="1" height="1" fill="#5a5a5e"/><rect x="28" y="2" width="1" height="1" fill="#5a5a5e"/><rect x="32" y="2" width="1" height="1" fill="#5a5a5e"/><rect x="36" y="2" width="1" height="1" fill="#5a5a5e"/><rect x="40" y="2" width="1" height="1" fill="#5a5a5e"/><rect x="44" y="2" width="1" height="1" fill="#5a5a5e"/><rect x="48" y="2" width="1" height="1" fill="#5a5a5e"/><rect x="52" y="2" width="1" height="1" fill="#5a5a5e"/><rect x="56" y="2" width="1" height="1" fill="#5a5a5e"/><rect x="60" y="2" width="1" height="1" fill="#5a5a5e"/><rect x="64" y="2" width="1" height="1" fill="#5a5a5e"/><rect x="68" y="2" width="1" height="1" fill="#5a5a5e"/><rect x="72" y="2" width="1" height="1" fill="#5a5a5e"/><rect x="76" y="2" width="1" height="1" fill="#5a5a5e"/><rect x="80" y="2" width="1" height="1" fill="#5a5a5e"/><rect x="84" y="2" width="1" height="1" fill="#5a5a5e"/><rect x="88" y="2" width="1" height="1" fill="#5a5a5e"/><rect x="92" y="2" width="1" height="1" fill="#5a5a5e"/><rect x="96" y="2" width="1" height="1" fill="#5a5a5e"/><rect x="100" y="2" width="1" height="1" fill="#5a5a5e"/><rect x="104" y="2" width="1" height="1" fill="#5a5a5e"/><rect x="108" y="2" width="1" height="1" fill="#5a5a5e"/><rect x="112" y="2" width="1" height="1" fill="#5a5a5e"/><rect x="116" y="2" width="1" height="1" fill="#5a5a5e"/><rect x="120" y="2" width="1" height="1" fill="#5a5a5e"/><rect x="124" y="2" width="1" height="1" fill="#5a5a5e"/><rect x="128" y="2" width="1" height="1" fill="#5a5a5e"/><rect x="132" y="2" width="1" height="1" fill="#5a5a5e"/><rect x="136" y="2" width="1" height="1" fill="#5a5a5e"/><rect x="140" y="2" width="1" height="1" fill="#5a5a5e"/><rect x="144" y="2" width="1" height="1" fill="#5a5a5e"/><rect x="148" y="2" width="1" height="1" fill="#5a5a5e"/><rect x="152" y="2" width="1" height="1" fill="#5a5a5e"/><rect x="156" y="2" width="1" height="1" fill="#5a5a5e"/><rect x="160" y="2" width="1" height="1" fill="#5a5a5e"/><rect x="164" y="2" width="1" height="1" fill="#5a5a5e"/><rect x="168" y="2" width="1" height="1" fill="#5a5a5e"/><rect x="172" y="2" width="1" height="1" fill="#5a5a5e"/><rect x="176" y="2" width="1" height="1" fill="#5a5a5e"/><rect x="180" y="2" width="1" height="1" fill="#5a5a5e"/><rect x="184" y="2" width="1" height="1" fill="#5a5a5e"/><rect x="188" y="2" width="1" height="1" fill="#5a5a5e"/><rect x="192" y="2" width="1" height="1" fill="#5a5a5e"/><rect x="196" y="2" width="1" height="1" fill="#5a5a5e"/><rect x="200" y="2" width="1" height="1" fill="#5a5a5e"/><rect x="204" y="2" width="1" height="1" fill="#5a5a5e"/><rect x="208" y="2" width="1" height="1" fill="#5a5a5e"/><rect x="212" y="2" width="1" height="1" fill="#5a5a5e"/><rect x="216" y="2" width="1" height="1" fill="#5a5a5e"/><rect x="220" y="2" width="1" height="1" fill="#5a5a5e"/><rect x="224" y="2" width="1" height="1" fill="#5a5a5e"/><rect x="228" y="2" width="1" height="1" fill="#5a5a5e"/><rect x="232" y="2" width="1" height="1" fill="#5a5a5e"/><rect x="236" y="2" width="1" height="1" fill="#5a5a5e"/><rect x="240" y="2" width="1" height="1" fill="#5a5a5e"/><rect x="244" y="2" width="1" height="1" fill="#5a5a5e"/><rect x="248" y="2" width="1" height="1" fill="#5a5a5e"/><rect x="252" y="2" width="1" height="1" fill="#5a5a5e"/><rect x="256" y="2" width="1" height="1" fill="#5a5a5e"/><rect x="260" y="2" width="1" height="1" fill="#5a5a5e"/><rect x="264" y="2" width="1" height="1" fill="#5a5a5e"/><rect x="268" y="2" width="1" height="1" fill="#5a5a5e"/><rect x="272" y="2" width="1" height="1" fill="#5a5a5e"/><rect x="276" y="2" width="1" height="1" fill="#5a5a5e"/><rect x="280" y="2" width="1" height="1" fill="#5a5a5e"/><rect x="284" y="2" width="1" height="1" fill="#5a5a5e"/><rect x="288" y="2" width="1" height="1" fill="#5a5a5e"/><rect x="292" y="2" width="1" height="1" fill="#5a5a5e"/><rect x="296" y="2" width="1" height="1" fill="#5a5a5e"/><rect x="300" y="2" width="1" height="1" fill="#5a5a5e"/><rect x="304" y="2" width="1" height="1" fill="#5a5a5e"/><rect x="308" y="2" width="1" height="1" fill="#5a5a5e"/><rect x="312" y="2" width="1" height="1" fill="#5a5a5e"/><rect x="316" y="2" width="1" height="1" fill="#5a5a5e"/><rect x="320" y="2" width="1" height="1" fill="#5a5a5e"/><rect x="324" y="2" width="1" height="1" fill="#5a5a5e"/><rect x="328" y="2" width="1" height="1" fill="#5a5a5e"/><rect x="332" y="2" width="1" height="1" fill="#5a5a5e"/><rect x="336" y="2" width="1" height="1" fill="#5a5a5e"/><rect x="340" y="2" width="1" height="1" fill="#5a5a5e"/><rect x="344" y="2" width="1" height="1" fill="#5a5a5e"/><rect x="348" y="2" width="1" height="1" fill="#5a5a5e"/><rect x="352" y="2" width="1" height="1" fill="#5a5a5e"/><rect x="356" y="2" width="1" height="1" fill="#5a5a5e"/><rect x="360" y="2" width="1" height="1" fill="#5a5a5e"/><rect x="364" y="2" width="1" height="1" fill="#5a5a5e"/><rect x="368" y="2" width="1" height="1" fill="#5a5a5e"/><rect x="372" y="2" width="1" height="1" fill="#5a5a5e"/><rect x="376" y="2" width="1" height="1" fill="#5a5a5e"/><rect x="380" y="2" width="1" height="1" fill="#5a5a5e"/><rect x="384" y="2" width="1" height="1" fill="#5a5a5e"/><rect x="388" y="2" width="1" height="1" fill="#5a5a5e"/><rect x="392" y="2" width="1" height="1" fill="#5a5a5e"/><rect x="396" y="2" width="1" height="1" fill="#5a5a5e"/><rect x="400" y="2" width="1" height="1" fill="#5a5a5e"/><rect x="404" y="2" width="1" height="1" fill="#5a5a5e"/><rect x="408" y="2" width="1" height="1" fill="#5a5a5e"/><rect x="412" y="2" width="1" height="1" fill="#5a5a5e"/><rect x="416" y="2" width="1" height="1" fill="#5a5a5e"/><rect x="420" y="2" width="1" height="1" fill="#5a5a5e"/><rect x="424" y="2" width="1" height="1" fill="#5a5a5e"/><rect x="428" y="2" width="1" height="1" fill="#5a5a5e"/><rect x="432" y="2" width="1" height="1" fill="#5a5a5e"/><rect x="436" y="2" width="1" height="1" fill="#5a5a5e"/><rect x="440" y="2" width="1" height="1" fill="#5a5a5e"/><rect x="444" y="2" width="1" height="1" fill="#5a5a5e"/><rect x="448" y="2" width="1" height="1" fill="#5a5a5e"/><rect x="452" y="2" width="1" height="1" fill="#5a5a5e"/><rect x="456" y="2" width="1" height="1" fill="#5a5a5e"/><rect x="460" y="2" width="1" height="1" fill="#5a5a5e"/><rect x="464" y="2" width="1" height="1" fill="#5a5a5e"/><rect x="468" y="2" width="1" height="1" fill="#5a5a5e"/><rect x="472" y="2" width="1" height="1" fill="#5a5a5e"/><rect x="476" y="2" width="1" height="1" fill="#5a5a5e"/><rect x="480" y="2" width="1" height="1" fill="#5a5a5e"/><rect x="484" y="2" width="1" height="1" fill="#5a5a5e"/><rect x="488" y="2" width="1" height="1" fill="#5a5a5e"/><rect x="492" y="2" width="1" height="1" fill="#5a5a5e"/><rect x="496" y="2" width="1" height="1" fill="#5a5a5e"/><rect x="500" y="2" width="1" height="1" fill="#5a5a5e"/><rect x="504" y="2" width="1" height="1" fill="#5a5a5e"/><rect x="508" y="2" width="1" height="1" fill="#5a5a5e"/><rect x="512" y="2" width="1" height="1" fill="#5a5a5e"/><rect x="516" y="2" width="1" height="1" fill="#5a5a5e"/><rect x="520" y="2" width="1" height="1" fill="#5a5a5e"/><rect x="2" y="4" width="1" height="1" fill="#5a5a5e"/><rect x="6" y="4" width="1" height="1" fill="#5a5a5e"/><rect x="10" y="4" width="1" height="1" fill="#5a5a5e"/><rect x="14" y="4" width="1" height="1" fill="#5a5a5e"/><rect x="18" y="4" width="1" height="1" fill="#5a5a5e"/><rect x="22" y="4" width="1" height="1" fill="#5a5a5e"/><rect x="26" y="4" width="1" height="1" fill="#5a5a5e"/><rect x="30" y="4" width="1" height="1" fill="#5a5a5e"/><rect x="34" y="4" width="1" height="1" fill="#5a5a5e"/><rect x="38" y="4" width="1" height="1" fill="#5a5a5e"/><rect x="42" y="4" width="1" height="1" fill="#5a5a5e"/><rect x="46" y="4" width="1" height="1" fill="#5a5a5e"/><rect x="50" y="4" width="1" height="1" fill="#5a5a5e"/><rect x="54" y="4" width="1" height="1" fill="#5a5a5e"/><rect x="58" y="4" width="1" height="1" fill="#5a5a5e"/><rect x="62" y="4" width="1" height="1" fill="#5a5a5e"/><rect x="66" y="4" width="1" height="1" fill="#5a5a5e"/><rect x="70" y="4" width="1" height="1" fill="#5a5a5e"/><rect x="74" y="4" width="1" height="1" fill="#5a5a5e"/><rect x="78" y="4" width="1" height="1" fill="#5a5a5e"/><rect x="82" y="4" width="1" height="1" fill="#5a5a5e"/><rect x="86" y="4" width="1" height="1" fill="#5a5a5e"/><rect x="90" y="4" width="1" height="1" fill="#5a5a5e"/><rect x="94" y="4" width="1" height="1" fill="#5a5a5e"/><rect x="98" y="4" width="1" height="1" fill="#5a5a5e"/><rect x="102" y="4" width="1" height="1" fill="#5a5a5e"/><rect x="106" y="4" width="1" height="1" fill="#5a5a5e"/><rect x="110" y="4" width="1" height="1" fill="#5a5a5e"/><rect x="114" y="4" width="1" height="1" fill="#5a5a5e"/><rect x="118" y="4" width="1" height="1" fill="#5a5a5e"/><rect x="122" y="4" width="1" height="1" fill="#5a5a5e"/><rect x="126" y="4" width="1" height="1" fill="#5a5a5e"/><rect x="130" y="4" width="1" height="1" fill="#5a5a5e"/><rect x="134" y="4" width="1" height="1" fill="#5a5a5e"/><rect x="138" y="4" width="1" height="1" fill="#5a5a5e"/><rect x="142" y="4" width="1" height="1" fill="#5a5a5e"/><rect x="146" y="4" width="1" height="1" fill="#5a5a5e"/><rect x="150" y="4" width="1" height="1" fill="#5a5a5e"/><rect x="154" y="4" width="1" height="1" fill="#5a5a5e"/><rect x="158" y="4" width="1" height="1" fill="#5a5a5e"/><rect x="162" y="4" width="1" height="1" fill="#5a5a5e"/><rect x="166" y="4" width="1" height="1" fill="#5a5a5e"/><rect x="170" y="4" width="1" height="1" fill="#5a5a5e"/><rect x="174" y="4" width="1" height="1" fill="#5a5a5e"/><rect x="178" y="4" width="1" height="1" fill="#5a5a5e"/><rect x="182" y="4" width="1" height="1" fill="#5a5a5e"/><rect x="186" y="4" width="1" height="1" fill="#5a5a5e"/><rect x="190" y="4" width="1" height="1" fill="#5a5a5e"/><rect x="194" y="4" width="1" height="1" fill="#5a5a5e"/><rect x="198" y="4" width="1" height="1" fill="#5a5a5e"/><rect x="202" y="4" width="1" height="1" fill="#5a5a5e"/><rect x="206" y="4" width="1" height="1" fill="#5a5a5e"/><rect x="210" y="4" width="1" height="1" fill="#5a5a5e"/><rect x="214" y="4" width="1" height="1" fill="#5a5a5e"/><rect x="218" y="4" width="1" height="1" fill="#5a5a5e"/><rect x="222" y="4" width="1" height="1" fill="#5a5a5e"/><rect x="226" y="4" width="1" height="1" fill="#5a5a5e"/><rect x="230" y="4" width="1" height="1" fill="#5a5a5e"/><rect x="234" y="4" width="1" height="1" fill="#5a5a5e"/><rect x="238" y="4" width="1" height="1" fill="#5a5a5e"/><rect x="242" y="4" width="1" height="1" fill="#5a5a5e"/><rect x="246" y="4" width="1" height="1" fill="#5a5a5e"/><rect x="250" y="4" width="1" height="1" fill="#5a5a5e"/><rect x="254" y="4" width="1" height="1" fill="#5a5a5e"/><rect x="258" y="4" width="1" height="1" fill="#5a5a5e"/><rect x="262" y="4" width="1" height="1" fill="#5a5a5e"/><rect x="266" y="4" width="1" height="1" fill="#5a5a5e"/><rect x="270" y="4" width="1" height="1" fill="#5a5a5e"/><rect x="274" y="4" width="1" height="1" fill="#5a5a5e"/><rect x="278" y="4" width="1" height="1" fill="#5a5a5e"/><rect x="282" y="4" width="1" height="1" fill="#5a5a5e"/><rect x="286" y="4" width="1" height="1" fill="#5a5a5e"/><rect x="290" y="4" width="1" height="1" fill="#5a5a5e"/><rect x="294" y="4" width="1" height="1" fill="#5a5a5e"/><rect x="298" y="4" width="1" height="1" fill="#5a5a5e"/><rect x="302" y="4" width="1" height="1" fill="#5a5a5e"/><rect x="306" y="4" width="1" height="1" fill="#5a5a5e"/><rect x="310" y="4" width="1" height="1" fill="#5a5a5e"/><rect x="314" y="4" width="1" height="1" fill="#5a5a5e"/><rect x="318" y="4" width="1" height="1" fill="#5a5a5e"/><rect x="322" y="4" width="1" height="1" fill="#5a5a5e"/><rect x="326" y="4" width="1" height="1" fill="#5a5a5e"/><rect x="330" y="4" width="1" height="1" fill="#5a5a5e"/><rect x="334" y="4" width="1" height="1" fill="#5a5a5e"/><rect x="338" y="4" width="1" height="1" fill="#5a5a5e"/><rect x="342" y="4" width="1" height="1" fill="#5a5a5e"/><rect x="346" y="4" width="1" height="1" fill="#5a5a5e"/><rect x="350" y="4" width="1" height="1" fill="#5a5a5e"/><rect x="354" y="4" width="1" height="1" fill="#5a5a5e"/><rect x="358" y="4" width="1" height="1" fill="#5a5a5e"/><rect x="362" y="4" width="1" height="1" fill="#5a5a5e"/><rect x="366" y="4" width="1" height="1" fill="#5a5a5e"/><rect x="370" y="4" width="1" height="1" fill="#5a5a5e"/><rect x="374" y="4" width="1" height="1" fill="#5a5a5e"/><rect x="378" y="4" width="1" height="1" fill="#5a5a5e"/><rect x="382" y="4" width="1" height="1" fill="#5a5a5e"/><rect x="386" y="4" width="1" height="1" fill="#5a5a5e"/><rect x="390" y="4" width="1" height="1" fill="#5a5a5e"/><rect x="394" y="4" width="1" height="1" fill="#5a5a5e"/><rect x="398" y="4" width="1" height="1" fill="#5a5a5e"/><rect x="402" y="4" width="1" height="1" fill="#5a5a5e"/><rect x="406" y="4" width="1" height="1" fill="#5a5a5e"/><rect x="410" y="4" width="1" height="1" fill="#5a5a5e"/><rect x="414" y="4" width="1" height="1" fill="#5a5a5e"/><rect x="418" y="4" width="1" height="1" fill="#5a5a5e"/><rect x="422" y="4" width="1" height="1" fill="#5a5a5e"/><rect x="426" y="4" width="1" height="1" fill="#5a5a5e"/><rect x="430" y="4" width="1" height="1" fill="#5a5a5e"/><rect x="434" y="4" width="1" height="1" fill="#5a5a5e"/><rect x="438" y="4" width="1" height="1" fill="#5a5a5e"/><rect x="442" y="4" width="1" height="1" fill="#5a5a5e"/><rect x="446" y="4" width="1" height="1" fill="#5a5a5e"/><rect x="450" y="4" width="1" height="1" fill="#5a5a5e"/><rect x="454" y="4" width="1" height="1" fill="#5a5a5e"/><rect x="458" y="4" width="1" height="1" fill="#5a5a5e"/><rect x="462" y="4" width="1" height="1" fill="#5a5a5e"/><rect x="466" y="4" width="1" height="1" fill="#5a5a5e"/><rect x="470" y="4" width="1" height="1" fill="#5a5a5e"/><rect x="474" y="4" width="1" height="1" fill="#5a5a5e"/><rect x="478" y="4" width="1" height="1" fill="#5a5a5e"/><rect x="482" y="4" width="1" height="1" fill="#5a5a5e"/><rect x="486" y="4" width="1" height="1" fill="#5a5a5e"/><rect x="490" y="4" width="1" height="1" fill="#5a5a5e"/><rect x="494" y="4" width="1" height="1" fill="#5a5a5e"/><rect x="498" y="4" width="1" height="1" fill="#5a5a5e"/><rect x="502" y="4" width="1" height="1" fill="#5a5a5e"/><rect x="506" y="4" width="1" height="1" fill="#5a5a5e"/><rect x="510" y="4" width="1" height="1" fill="#5a5a5e"/><rect x="514" y="4" width="1" height="1" fill="#5a5a5e"/><rect x="518" y="4" width="1" height="1" fill="#5a5a5e"/><rect x="522" y="4" width="1" height="1" fill="#5a5a5e"/></svg>
<svg class="a" style="left:802px;top:827px;" width="8" height="4" viewBox="0 0 8 4"><path d="M0 0H8L4.0 4.0Z" fill="#f1f1f1"/></svg>
<svg class="a" style="left:819px;top:823px;" width="8" height="12" viewBox="0 0 8 12"><path d="M1.5 0.5H6.5V6.5H1.5Z" fill="none" stroke="#f1f1f1"/><rect x="4" y="1" width="1" height="6" fill="#f1f1f1"/><rect x="0" y="6" width="8" height="1.5" fill="#f1f1f1"/><rect x="3.5" y="7" width="1.2" height="5" fill="#f1f1f1"/></svg>
<svg class="a" style="left:836px;top:825px;" width="9" height="9" viewBox="0 0 9 9"><path d="M0.5 0.5L8.5 8.5M8.5 0.5L0.5 8.5" stroke="#f1f1f1" stroke-width="1.6"/></svg>
<svg class="a" style="left:920px;top:826px;" width="682" height="5" viewBox="0 0 682 5"><rect x="2" y="0" width="1" height="1" fill="#5a5a5e"/><rect x="6" y="0" width="1" height="1" fill="#5a5a5e"/><rect x="10" y="0" width="1" height="1" fill="#5a5a5e"/><rect x="14" y="0" width="1" height="1" fill="#5a5a5e"/><rect x="18" y="0" width="1" height="1" fill="#5a5a5e"/><rect x="22" y="0" width="1" height="1" fill="#5a5a5e"/><rect x="26" y="0" width="1" height="1" fill="#5a5a5e"/><rect x="30" y="0" width="1" height="1" fill="#5a5a5e"/><rect x="34" y="0" width="1" height="1" fill="#5a5a5e"/><rect x="38" y="0" width="1" height="1" fill="#5a5a5e"/><rect x="42" y="0" width="1" height="1" fill="#5a5a5e"/><rect x="46" y="0" width="1" height="1" fill="#5a5a5e"/><rect x="50" y="0" width="1" height="1" fill="#5a5a5e"/><rect x="54" y="0" width="1" height="1" fill="#5a5a5e"/><rect x="58" y="0" width="1" height="1" fill="#5a5a5e"/><rect x="62" y="0" width="1" height="1" fill="#5a5a5e"/><rect x="66" y="0" width="1" height="1" fill="#5a5a5e"/><rect x="70" y="0" width="1" height="1" fill="#5a5a5e"/><rect x="74" y="0" width="1" height="1" fill="#5a5a5e"/><rect x="78" y="0" width="1" height="1" fill="#5a5a5e"/><rect x="82" y="0" width="1" height="1" fill="#5a5a5e"/><rect x="86" y="0" width="1" height="1" fill="#5a5a5e"/><rect x="90" y="0" width="1" height="1" fill="#5a5a5e"/><rect x="94" y="0" width="1" height="1" fill="#5a5a5e"/><rect x="98" y="0" width="1" height="1" fill="#5a5a5e"/><rect x="102" y="0" width="1" height="1" fill="#5a5a5e"/><rect x="106" y="0" width="1" height="1" fill="#5a5a5e"/><rect x="110" y="0" width="1" height="1" fill="#5a5a5e"/><rect x="114" y="0" width="1" height="1" fill="#5a5a5e"/><rect x="118" y="0" width="1" height="1" fill="#5a5a5e"/><rect x="122" y="0" width="1" height="1" fill="#5a5a5e"/><rect x="126" y="0" width="1" height="1" fill="#5a5a5e"/><rect x="130" y="0" width="1" height="1" fill="#5a5a5e"/><rect x="134" y="0" width="1" height="1" fill="#5a5a5e"/><rect x="138" y="0" width="1" height="1" fill="#5a5a5e"/><rect x="142" y="0" width="1" height="1" fill="#5a5a5e"/><rect x="146" y="0" width="1" height="1" fill="#5a5a5e"/><rect x="150" y="0" width="1" height="1" fill="#5a5a5e"/><rect x="154" y="0" width="1" height="1" fill="#5a5a5e"/><rect x="158" y="0" width="1" height="1" fill="#5a5a5e"/><rect x="162" y="0" width="1" height="1" fill="#5a5a5e"/><rect x="166" y="0" width="1" height="1" fill="#5a5a5e"/><rect x="170" y="0" width="1" height="1" fill="#5a5a5e"/><rect x="174" y="0" width="1" height="1" fill="#5a5a5e"/><rect x="178" y="0" width="1" height="1" fill="#5a5a5e"/><rect x="182" y="0" width="1" height="1" fill="#5a5a5e"/><rect x="186" y="0" width="1" height="1" fill="#5a5a5e"/><rect x="190" y="0" width="1" height="1" fill="#5a5a5e"/><rect x="194" y="0" width="1" height="1" fill="#5a5a5e"/><rect x="198" y="0" width="1" height="1" fill="#5a5a5e"/><rect x="202" y="0" width="1" height="1" fill="#5a5a5e"/><rect x="206" y="0" width="1" height="1" fill="#5a5a5e"/><rect x="210" y="0" width="1" height="1" fill="#5a5a5e"/><rect x="214" y="0" width="1" height="1" fill="#5a5a5e"/><rect x="218" y="0" width="1" height="1" fill="#5a5a5e"/><rect x="222" y="0" width="1" height="1" fill="#5a5a5e"/><rect x="226" y="0" width="1" height="1" fill="#5a5a5e"/><rect x="230" y="0" width="1" height="1" fill="#5a5a5e"/><rect x="234" y="0" width="1" height="1" fill="#5a5a5e"/><rect x="238" y="0" width="1" height="1" fill="#5a5a5e"/><rect x="242" y="0" width="1" height="1" fill="#5a5a5e"/><rect x="246" y="0" width="1" height="1" fill="#5a5a5e"/><rect x="250" y="0" width="1" height="1" fill="#5a5a5e"/><rect x="254" y="0" width="1" height="1" fill="#5a5a5e"/><rect x="258" y="0" width="1" height="1" fill="#5a5a5e"/><rect x="262" y="0" width="1" height="1" fill="#5a5a5e"/><rect x="266" y="0" width="1" height="1" fill="#5a5a5e"/><rect x="270" y="0" width="1" height="1" fill="#5a5a5e"/><rect x="274" y="0" width="1" height="1" fill="#5a5a5e"/><rect x="278" y="0" width="1" height="1" fill="#5a5a5e"/><rect x="282" y="0" width="1" height="1" fill="#5a5a5e"/><rect x="286" y="0" width="1" height="1" fill="#5a5a5e"/><rect x="290" y="0" width="1" height="1" fill="#5a5a5e"/><rect x="294" y="0" width="1" height="1" fill="#5a5a5e"/><rect x="298" y="0" width="1" height="1" fill="#5a5a5e"/><rect x="302" y="0" width="1" height="1" fill="#5a5a5e"/><rect x="306" y="0" width="1" height="1" fill="#5a5a5e"/><rect x="310" y="0" width="1" height="1" fill="#5a5a5e"/><rect x="314" y="0" width="1" height="1" fill="#5a5a5e"/><rect x="318" y="0" width="1" height="1" fill="#5a5a5e"/><rect x="322" y="0" width="1" height="1" fill="#5a5a5e"/><rect x="326" y="0" width="1" height="1" fill="#5a5a5e"/><rect x="330" y="0" width="1" height="1" fill="#5a5a5e"/><rect x="334" y="0" width="1" height="1" fill="#5a5a5e"/><rect x="338" y="0" width="1" height="1" fill="#5a5a5e"/><rect x="342" y="0" width="1" height="1" fill="#5a5a5e"/><rect x="346" y="0" width="1" height="1" fill="#5a5a5e"/><rect x="350" y="0" width="1" height="1" fill="#5a5a5e"/><rect x="354" y="0" width="1" height="1" fill="#5a5a5e"/><rect x="358" y="0" width="1" height="1" fill="#5a5a5e"/><rect x="362" y="0" width="1" height="1" fill="#5a5a5e"/><rect x="366" y="0" width="1" height="1" fill="#5a5a5e"/><rect x="370" y="0" width="1" height="1" fill="#5a5a5e"/><rect x="374" y="0" width="1" height="1" fill="#5a5a5e"/><rect x="378" y="0" width="1" height="1" fill="#5a5a5e"/><rect x="382" y="0" width="1" height="1" fill="#5a5a5e"/><rect x="386" y="0" width="1" height="1" fill="#5a5a5e"/><rect x="390" y="0" width="1" height="1" fill="#5a5a5e"/><rect x="394" y="0" width="1" height="1" fill="#5a5a5e"/><rect x="398" y="0" width="1" height="1" fill="#5a5a5e"/><rect x="402" y="0" width="1" height="1" fill="#5a5a5e"/><rect x="406" y="0" width="1" height="1" fill="#5a5a5e"/><rect x="410" y="0" width="1" height="1" fill="#5a5a5e"/><rect x="414" y="0" width="1" height="1" fill="#5a5a5e"/><rect x="418" y="0" width="1" height="1" fill="#5a5a5e"/><rect x="422" y="0" width="1" height="1" fill="#5a5a5e"/><rect x="426" y="0" width="1" height="1" fill="#5a5a5e"/><rect x="430" y="0" width="1" height="1" fill="#5a5a5e"/><rect x="434" y="0" width="1" height="1" fill="#5a5a5e"/><rect x="438" y="0" width="1" height="1" fill="#5a5a5e"/><rect x="442" y="0" width="1" height="1" fill="#5a5a5e"/><rect x="446" y="0" width="1" height="1" fill="#5a5a5e"/><rect x="450" y="0" width="1" height="1" fill="#5a5a5e"/><rect x="454" y="0" width="1" height="1" fill="#5a5a5e"/><rect x="458" y="0" width="1" height="1" fill="#5a5a5e"/><rect x="462" y="0" width="1" height="1" fill="#5a5a5e"/><rect x="466" y="0" width="1" height="1" fill="#5a5a5e"/><rect x="470" y="0" width="1" height="1" fill="#5a5a5e"/><rect x="474" y="0" width="1" height="1" fill="#5a5a5e"/><rect x="478" y="0" width="1" height="1" fill="#5a5a5e"/><rect x="482" y="0" width="1" height="1" fill="#5a5a5e"/><rect x="486" y="0" width="1" height="1" fill="#5a5a5e"/><rect x="490" y="0" width="1" height="1" fill="#5a5a5e"/><rect x="494" y="0" width="1" height="1" fill="#5a5a5e"/><rect x="498" y="0" width="1" height="1" fill="#5a5a5e"/><rect x="502" y="0" width="1" height="1" fill="#5a5a5e"/><rect x="506" y="0" width="1" height="1" fill="#5a5a5e"/><rect x="510" y="0" width="1" height="1" fill="#5a5a5e"/><rect x="514" y="0" width="1" height="1" fill="#5a5a5e"/><rect x="518" y="0" width="1" height="1" fill="#5a5a5e"/><rect x="522" y="0" width="1" height="1" fill="#5a5a5e"/><rect x="526" y="0" width="1" height="1" fill="#5a5a5e"/><rect x="530" y="0" width="1" height="1" fill="#5a5a5e"/><rect x="534" y="0" width="1" height="1" fill="#5a5a5e"/><rect x="538" y="0" width="1" height="1" fill="#5a5a5e"/><rect x="542" y="0" width="1" height="1" fill="#5a5a5e"/><rect x="546" y="0" width="1" height="1" fill="#5a5a5e"/><rect x="550" y="0" width="1" height="1" fill="#5a5a5e"/><rect x="554" y="0" width="1" height="1" fill="#5a5a5e"/><rect x="558" y="0" width="1" height="1" fill="#5a5a5e"/><rect x="562" y="0" width="1" height="1" fill="#5a5a5e"/><rect x="566" y="0" width="1" height="1" fill="#5a5a5e"/><rect x="570" y="0" width="1" height="1" fill="#5a5a5e"/><rect x="574" y="0" width="1" height="1" fill="#5a5a5e"/><rect x="578" y="0" width="1" height="1" fill="#5a5a5e"/><rect x="582" y="0" width="1" height="1" fill="#5a5a5e"/><rect x="586" y="0" width="1" height="1" fill="#5a5a5e"/><rect x="590" y="0" width="1" height="1" fill="#5a5a5e"/><rect x="594" y="0" width="1" height="1" fill="#5a5a5e"/><rect x="598" y="0" width="1" height="1" fill="#5a5a5e"/><rect x="602" y="0" width="1" height="1" fill="#5a5a5e"/><rect x="606" y="0" width="1" height="1" fill="#5a5a5e"/><rect x="610" y="0" width="1" height="1" fill="#5a5a5e"/><rect x="614" y="0" width="1" height="1" fill="#5a5a5e"/><rect x="618" y="0" width="1" height="1" fill="#5a5a5e"/><rect x="622" y="0" width="1" height="1" fill="#5a5a5e"/><rect x="626" y="0" width="1" height="1" fill="#5a5a5e"/><rect x="630" y="0" width="1" height="1" fill="#5a5a5e"/><rect x="634" y="0" width="1" height="1" fill="#5a5a5e"/><rect x="638" y="0" width="1" height="1" fill="#5a5a5e"/><rect x="642" y="0" width="1" height="1" fill="#5a5a5e"/><rect x="646" y="0" width="1" height="1" fill="#5a5a5e"/><rect x="650" y="0" width="1" height="1" fill="#5a5a5e"/><rect x="654" y="0" width="1" height="1" fill="#5a5a5e"/><rect x="658" y="0" width="1" height="1" fill="#5a5a5e"/><rect x="662" y="0" width="1" height="1" fill="#5a5a5e"/><rect x="666" y="0" width="1" height="1" fill="#5a5a5e"/><rect x="670" y="0" width="1" height="1" fill="#5a5a5e"/><rect x="674" y="0" width="1" height="1" fill="#5a5a5e"/><rect x="678" y="0" width="1" height="1" fill="#5a5a5e"/><rect x="0" y="2" width="1" height="1" fill="#5a5a5e"/><rect x="4" y="2" width="1" height="1" fill="#5a5a5e"/><rect x="8" y="2" width="1" height="1" fill="#5a5a5e"/><rect x="12" y="2" width="1" height="1" fill="#5a5a5e"/><rect x="16" y="2" width="1" height="1" fill="#5a5a5e"/><rect x="20" y="2" width="1" height="1" fill="#5a5a5e"/><rect x="24" y="2" width="1" height="1" fill="#5a5a5e"/><rect x="28" y="2" width="1" height="1" fill="#5a5a5e"/><rect x="32" y="2" width="1" height="1" fill="#5a5a5e"/><rect x="36" y="2" width="1" height="1" fill="#5a5a5e"/><rect x="40" y="2" width="1" height="1" fill="#5a5a5e"/><rect x="44" y="2" width="1" height="1" fill="#5a5a5e"/><rect x="48" y="2" width="1" height="1" fill="#5a5a5e"/><rect x="52" y="2" width="1" height="1" fill="#5a5a5e"/><rect x="56" y="2" width="1" height="1" fill="#5a5a5e"/><rect x="60" y="2" width="1" height="1" fill="#5a5a5e"/><rect x="64" y="2" width="1" height="1" fill="#5a5a5e"/><rect x="68" y="2" width="1" height="1" fill="#5a5a5e"/><rect x="72" y="2" width="1" height="1" fill="#5a5a5e"/><rect x="76" y="2" width="1" height="1" fill="#5a5a5e"/><rect x="80" y="2" width="1" height="1" fill="#5a5a5e"/><rect x="84" y="2" width="1" height="1" fill="#5a5a5e"/><rect x="88" y="2" width="1" height="1" fill="#5a5a5e"/><rect x="92" y="2" width="1" height="1" fill="#5a5a5e"/><rect x="96" y="2" width="1" height="1" fill="#5a5a5e"/><rect x="100" y="2" width="1" height="1" fill="#5a5a5e"/><rect x="104" y="2" width="1" height="1" fill="#5a5a5e"/><rect x="108" y="2" width="1" height="1" fill="#5a5a5e"/><rect x="112" y="2" width="1" height="1" fill="#5a5a5e"/><rect x="116" y="2" width="1" height="1" fill="#5a5a5e"/><rect x="120" y="2" width="1" height="1" fill="#5a5a5e"/><rect x="124" y="2" width="1" height="1" fill="#5a5a5e"/><rect x="128" y="2" width="1" height="1" fill="#5a5a5e"/><rect x="132" y="2" width="1" height="1" fill="#5a5a5e"/><rect x="136" y="2" width="1" height="1" fill="#5a5a5e"/><rect x="140" y="2" width="1" height="1" fill="#5a5a5e"/><rect x="144" y="2" width="1" height="1" fill="#5a5a5e"/><rect x="148" y="2" width="1" height="1" fill="#5a5a5e"/><rect x="152" y="2" width="1" height="1" fill="#5a5a5e"/><rect x="156" y="2" width="1" height="1" fill="#5a5a5e"/><rect x="160" y="2" width="1" height="1" fill="#5a5a5e"/><rect x="164" y="2" width="1" height="1" fill="#5a5a5e"/><rect x="168" y="2" width="1" height="1" fill="#5a5a5e"/><rect x="172" y="2" width="1" height="1" fill="#5a5a5e"/><rect x="176" y="2" width="1" height="1" fill="#5a5a5e"/><rect x="180" y="2" width="1" height="1" fill="#5a5a5e"/><rect x="184" y="2" width="1" height="1" fill="#5a5a5e"/><rect x="188" y="2" width="1" height="1" fill="#5a5a5e"/><rect x="192" y="2" width="1" height="1" fill="#5a5a5e"/><rect x="196" y="2" width="1" height="1" fill="#5a5a5e"/><rect x="200" y="2" width="1" height="1" fill="#5a5a5e"/><rect x="204" y="2" width="1" height="1" fill="#5a5a5e"/><rect x="208" y="2" width="1" height="1" fill="#5a5a5e"/><rect x="212" y="2" width="1" height="1" fill="#5a5a5e"/><rect x="216" y="2" width="1" height="1" fill="#5a5a5e"/><rect x="220" y="2" width="1" height="1" fill="#5a5a5e"/><rect x="224" y="2" width="1" height="1" fill="#5a5a5e"/><rect x="228" y="2" width="1" height="1" fill="#5a5a5e"/><rect x="232" y="2" width="1" height="1" fill="#5a5a5e"/><rect x="236" y="2" width="1" height="1" fill="#5a5a5e"/><rect x="240" y="2" width="1" height="1" fill="#5a5a5e"/><rect x="244" y="2" width="1" height="1" fill="#5a5a5e"/><rect x="248" y="2" width="1" height="1" fill="#5a5a5e"/><rect x="252" y="2" width="1" height="1" fill="#5a5a5e"/><rect x="256" y="2" width="1" height="1" fill="#5a5a5e"/><rect x="260" y="2" width="1" height="1" fill="#5a5a5e"/><rect x="264" y="2" width="1" height="1" fill="#5a5a5e"/><rect x="268" y="2" width="1" height="1" fill="#5a5a5e"/><rect x="272" y="2" width="1" height="1" fill="#5a5a5e"/><rect x="276" y="2" width="1" height="1" fill="#5a5a5e"/><rect x="280" y="2" width="1" height="1" fill="#5a5a5e"/><rect x="284" y="2" width="1" height="1" fill="#5a5a5e"/><rect x="288" y="2" width="1" height="1" fill="#5a5a5e"/><rect x="292" y="2" width="1" height="1" fill="#5a5a5e"/><rect x="296" y="2" width="1" height="1" fill="#5a5a5e"/><rect x="300" y="2" width="1" height="1" fill="#5a5a5e"/><rect x="304" y="2" width="1" height="1" fill="#5a5a5e"/><rect x="308" y="2" width="1" height="1" fill="#5a5a5e"/><rect x="312" y="2" width="1" height="1" fill="#5a5a5e"/><rect x="316" y="2" width="1" height="1" fill="#5a5a5e"/><rect x="320" y="2" width="1" height="1" fill="#5a5a5e"/><rect x="324" y="2" width="1" height="1" fill="#5a5a5e"/><rect x="328" y="2" width="1" height="1" fill="#5a5a5e"/><rect x="332" y="2" width="1" height="1" fill="#5a5a5e"/><rect x="336" y="2" width="1" height="1" fill="#5a5a5e"/><rect x="340" y="2" width="1" height="1" fill="#5a5a5e"/><rect x="344" y="2" width="1" height="1" fill="#5a5a5e"/><rect x="348" y="2" width="1" height="1" fill="#5a5a5e"/><rect x="352" y="2" width="1" height="1" fill="#5a5a5e"/><rect x="356" y="2" width="1" height="1" fill="#5a5a5e"/><rect x="360" y="2" width="1" height="1" fill="#5a5a5e"/><rect x="364" y="2" width="1" height="1" fill="#5a5a5e"/><rect x="368" y="2" width="1" height="1" fill="#5a5a5e"/><rect x="372" y="2" width="1" height="1" fill="#5a5a5e"/><rect x="376" y="2" width="1" height="1" fill="#5a5a5e"/><rect x="380" y="2" width="1" height="1" fill="#5a5a5e"/><rect x="384" y="2" width="1" height="1" fill="#5a5a5e"/><rect x="388" y="2" width="1" height="1" fill="#5a5a5e"/><rect x="392" y="2" width="1" height="1" fill="#5a5a5e"/><rect x="396" y="2" width="1" height="1" fill="#5a5a5e"/><rect x="400" y="2" width="1" height="1" fill="#5a5a5e"/><rect x="404" y="2" width="1" height="1" fill="#5a5a5e"/><rect x="408" y="2" width="1" height="1" fill="#5a5a5e"/><rect x="412" y="2" width="1" height="1" fill="#5a5a5e"/><rect x="416" y="2" width="1" height="1" fill="#5a5a5e"/><rect x="420" y="2" width="1" height="1" fill="#5a5a5e"/><rect x="424" y="2" width="1" height="1" fill="#5a5a5e"/><rect x="428" y="2" width="1" height="1" fill="#5a5a5e"/><rect x="432" y="2" width="1" height="1" fill="#5a5a5e"/><rect x="436" y="2" width="1" height="1" fill="#5a5a5e"/><rect x="440" y="2" width="1" height="1" fill="#5a5a5e"/><rect x="444" y="2" width="1" height="1" fill="#5a5a5e"/><rect x="448" y="2" width="1" height="1" fill="#5a5a5e"/><rect x="452" y="2" width="1" height="1" fill="#5a5a5e"/><rect x="456" y="2" width="1" height="1" fill="#5a5a5e"/><rect x="460" y="2" width="1" height="1" fill="#5a5a5e"/><rect x="464" y="2" width="1" height="1" fill="#5a5a5e"/><rect x="468" y="2" width="1" height="1" fill="#5a5a5e"/><rect x="472" y="2" width="1" height="1" fill="#5a5a5e"/><rect x="476" y="2" width="1" height="1" fill="#5a5a5e"/><rect x="480" y="2" width="1" height="1" fill="#5a5a5e"/><rect x="484" y="2" width="1" height="1" fill="#5a5a5e"/><rect x="488" y="2" width="1" height="1" fill="#5a5a5e"/><rect x="492" y="2" width="1" height="1" fill="#5a5a5e"/><rect x="496" y="2" width="1" height="1" fill="#5a5a5e"/><rect x="500" y="2" width="1" height="1" fill="#5a5a5e"/><rect x="504" y="2" width="1" height="1" fill="#5a5a5e"/><rect x="508" y="2" width="1" height="1" fill="#5a5a5e"/><rect x="512" y="2" width="1" height="1" fill="#5a5a5e"/><rect x="516" y="2" width="1" height="1" fill="#5a5a5e"/><rect x="520" y="2" width="1" height="1" fill="#5a5a5e"/><rect x="524" y="2" width="1" height="1" fill="#5a5a5e"/><rect x="528" y="2" width="1" height="1" fill="#5a5a5e"/><rect x="532" y="2" width="1" height="1" fill="#5a5a5e"/><rect x="536" y="2" width="1" height="1" fill="#5a5a5e"/><rect x="540" y="2" width="1" height="1" fill="#5a5a5e"/><rect x="544" y="2" width="1" height="1" fill="#5a5a5e"/><rect x="548" y="2" width="1" height="1" fill="#5a5a5e"/><rect x="552" y="2" width="1" height="1" fill="#5a5a5e"/><rect x="556" y="2" width="1" height="1" fill="#5a5a5e"/><rect x="560" y="2" width="1" height="1" fill="#5a5a5e"/><rect x="564" y="2" width="1" height="1" fill="#5a5a5e"/><rect x="568" y="2" width="1" height="1" fill="#5a5a5e"/><rect x="572" y="2" width="1" height="1" fill="#5a5a5e"/><rect x="576" y="2" width="1" height="1" fill="#5a5a5e"/><rect x="580" y="2" width="1" height="1" fill="#5a5a5e"/><rect x="584" y="2" width="1" height="1" fill="#5a5a5e"/><rect x="588" y="2" width="1" height="1" fill="#5a5a5e"/><rect x="592" y="2" width="1" height="1" fill="#5a5a5e"/><rect x="596" y="2" width="1" height="1" fill="#5a5a5e"/><rect x="600" y="2" width="1" height="1" fill="#5a5a5e"/><rect x="604" y="2" width="1" height="1" fill="#5a5a5e"/><rect x="608" y="2" width="1" height="1" fill="#5a5a5e"/><rect x="612" y="2" width="1" height="1" fill="#5a5a5e"/><rect x="616" y="2" width="1" height="1" fill="#5a5a5e"/><rect x="620" y="2" width="1" height="1" fill="#5a5a5e"/><rect x="624" y="2" width="1" height="1" fill="#5a5a5e"/><rect x="628" y="2" width="1" height="1" fill="#5a5a5e"/><rect x="632" y="2" width="1" height="1" fill="#5a5a5e"/><rect x="636" y="2" width="1" height="1" fill="#5a5a5e"/><rect x="640" y="2" width="1" height="1" fill="#5a5a5e"/><rect x="644" y="2" width="1" height="1" fill="#5a5a5e"/><rect x="648" y="2" width="1" height="1" fill="#5a5a5e"/><rect x="652" y="2" width="1" height="1" fill="#5a5a5e"/><rect x="656" y="2" width="1" height="1" fill="#5a5a5e"/><rect x="660" y="2" width="1" height="1" fill="#5a5a5e"/><rect x="664" y="2" width="1" height="1" fill="#5a5a5e"/><rect x="668" y="2" width="1" height="1" fill="#5a5a5e"/><rect x="672" y="2" width="1" height="1" fill="#5a5a5e"/><rect x="676" y="2" width="1" height="1" fill="#5a5a5e"/><rect x="680" y="2" width="1" height="1" fill="#5a5a5e"/><rect x="2" y="4" width="1" height="1" fill="#5a5a5e"/><rect x="6" y="4" width="1" height="1" fill="#5a5a5e"/><rect x="10" y="4" width="1" height="1" fill="#5a5a5e"/><rect x="14" y="4" width="1" height="1" fill="#5a5a5e"/><rect x="18" y="4" width="1" height="1" fill="#5a5a5e"/><rect x="22" y="4" width="1" height="1" fill="#5a5a5e"/><rect x="26" y="4" width="1" height="1" fill="#5a5a5e"/><rect x="30" y="4" width="1" height="1" fill="#5a5a5e"/><rect x="34" y="4" width="1" height="1" fill="#5a5a5e"/><rect x="38" y="4" width="1" height="1" fill="#5a5a5e"/><rect x="42" y="4" width="1" height="1" fill="#5a5a5e"/><rect x="46" y="4" width="1" height="1" fill="#5a5a5e"/><rect x="50" y="4" width="1" height="1" fill="#5a5a5e"/><rect x="54" y="4" width="1" height="1" fill="#5a5a5e"/><rect x="58" y="4" width="1" height="1" fill="#5a5a5e"/><rect x="62" y="4" width="1" height="1" fill="#5a5a5e"/><rect x="66" y="4" width="1" height="1" fill="#5a5a5e"/><rect x="70" y="4" width="1" height="1" fill="#5a5a5e"/><rect x="74" y="4" width="1" height="1" fill="#5a5a5e"/><rect x="78" y="4" width="1" height="1" fill="#5a5a5e"/><rect x="82" y="4" width="1" height="1" fill="#5a5a5e"/><rect x="86" y="4" width="1" height="1" fill="#5a5a5e"/><rect x="90" y="4" width="1" height="1" fill="#5a5a5e"/><rect x="94" y="4" width="1" height="1" fill="#5a5a5e"/><rect x="98" y="4" width="1" height="1" fill="#5a5a5e"/><rect x="102" y="4" width="1" height="1" fill="#5a5a5e"/><rect x="106" y="4" width="1" height="1" fill="#5a5a5e"/><rect x="110" y="4" width="1" height="1" fill="#5a5a5e"/><rect x="114" y="4" width="1" height="1" fill="#5a5a5e"/><rect x="118" y="4" width="1" height="1" fill="#5a5a5e"/><rect x="122" y="4" width="1" height="1" fill="#5a5a5e"/><rect x="126" y="4" width="1" height="1" fill="#5a5a5e"/><rect x="130" y="4" width="1" height="1" fill="#5a5a5e"/><rect x="134" y="4" width="1" height="1" fill="#5a5a5e"/><rect x="138" y="4" width="1" height="1" fill="#5a5a5e"/><rect x="142" y="4" width="1" height="1" fill="#5a5a5e"/><rect x="146" y="4" width="1" height="1" fill="#5a5a5e"/><rect x="150" y="4" width="1" height="1" fill="#5a5a5e"/><rect x="154" y="4" width="1" height="1" fill="#5a5a5e"/><rect x="158" y="4" width="1" height="1" fill="#5a5a5e"/><rect x="162" y="4" width="1" height="1" fill="#5a5a5e"/><rect x="166" y="4" width="1" height="1" fill="#5a5a5e"/><rect x="170" y="4" width="1" height="1" fill="#5a5a5e"/><rect x="174" y="4" width="1" height="1" fill="#5a5a5e"/><rect x="178" y="4" width="1" height="1" fill="#5a5a5e"/><rect x="182" y="4" width="1" height="1" fill="#5a5a5e"/><rect x="186" y="4" width="1" height="1" fill="#5a5a5e"/><rect x="190" y="4" width="1" height="1" fill="#5a5a5e"/><rect x="194" y="4" width="1" height="1" fill="#5a5a5e"/><rect x="198" y="4" width="1" height="1" fill="#5a5a5e"/><rect x="202" y="4" width="1" height="1" fill="#5a5a5e"/><rect x="206" y="4" width="1" height="1" fill="#5a5a5e"/><rect x="210" y="4" width="1" height="1" fill="#5a5a5e"/><rect x="214" y="4" width="1" height="1" fill="#5a5a5e"/><rect x="218" y="4" width="1" height="1" fill="#5a5a5e"/><rect x="222" y="4" width="1" height="1" fill="#5a5a5e"/><rect x="226" y="4" width="1" height="1" fill="#5a5a5e"/><rect x="230" y="4" width="1" height="1" fill="#5a5a5e"/><rect x="234" y="4" width="1" height="1" fill="#5a5a5e"/><rect x="238" y="4" width="1" height="1" fill="#5a5a5e"/><rect x="242" y="4" width="1" height="1" fill="#5a5a5e"/><rect x="246" y="4" width="1" height="1" fill="#5a5a5e"/><rect x="250" y="4" width="1" height="1" fill="#5a5a5e"/><rect x="254" y="4" width="1" height="1" fill="#5a5a5e"/><rect x="258" y="4" width="1" height="1" fill="#5a5a5e"/><rect x="262" y="4" width="1" height="1" fill="#5a5a5e"/><rect x="266" y="4" width="1" height="1" fill="#5a5a5e"/><rect x="270" y="4" width="1" height="1" fill="#5a5a5e"/><rect x="274" y="4" width="1" height="1" fill="#5a5a5e"/><rect x="278" y="4" width="1" height="1" fill="#5a5a5e"/><rect x="282" y="4" width="1" height="1" fill="#5a5a5e"/><rect x="286" y="4" width="1" height="1" fill="#5a5a5e"/><rect x="290" y="4" width="1" height="1" fill="#5a5a5e"/><rect x="294" y="4" width="1" height="1" fill="#5a5a5e"/><rect x="298" y="4" width="1" height="1" fill="#5a5a5e"/><rect x="302" y="4" width="1" height="1" fill="#5a5a5e"/><rect x="306" y="4" width="1" height="1" fill="#5a5a5e"/><rect x="310" y="4" width="1" height="1" fill="#5a5a5e"/><rect x="314" y="4" width="1" height="1" fill="#5a5a5e"/><rect x="318" y="4" width="1" height="1" fill="#5a5a5e"/><rect x="322" y="4" width="1" height="1" fill="#5a5a5e"/><rect x="326" y="4" width="1" height="1" fill="#5a5a5e"/><rect x="330" y="4" width="1" height="1" fill="#5a5a5e"/><rect x="334" y="4" width="1" height="1" fill="#5a5a5e"/><rect x="338" y="4" width="1" height="1" fill="#5a5a5e"/><rect x="342" y="4" width="1" height="1" fill="#5a5a5e"/><rect x="346" y="4" width="1" height="1" fill="#5a5a5e"/><rect x="350" y="4" width="1" height="1" fill="#5a5a5e"/><rect x="354" y="4" width="1" height="1" fill="#5a5a5e"/><rect x="358" y="4" width="1" height="1" fill="#5a5a5e"/><rect x="362" y="4" width="1" height="1" fill="#5a5a5e"/><rect x="366" y="4" width="1" height="1" fill="#5a5a5e"/><rect x="370" y="4" width="1" height="1" fill="#5a5a5e"/><rect x="374" y="4" width="1" height="1" fill="#5a5a5e"/><rect x="378" y="4" width="1" height="1" fill="#5a5a5e"/><rect x="382" y="4" width="1" height="1" fill="#5a5a5e"/><rect x="386" y="4" width="1" height="1" fill="#5a5a5e"/><rect x="390" y="4" width="1" height="1" fill="#5a5a5e"/><rect x="394" y="4" width="1" height="1" fill="#5a5a5e"/><rect x="398" y="4" width="1" height="1" fill="#5a5a5e"/><rect x="402" y="4" width="1" height="1" fill="#5a5a5e"/><rect x="406" y="4" width="1" height="1" fill="#5a5a5e"/><rect x="410" y="4" width="1" height="1" fill="#5a5a5e"/><rect x="414" y="4" width="1" height="1" fill="#5a5a5e"/><rect x="418" y="4" width="1" height="1" fill="#5a5a5e"/><rect x="422" y="4" width="1" height="1" fill="#5a5a5e"/><rect x="426" y="4" width="1" height="1" fill="#5a5a5e"/><rect x="430" y="4" width="1" height="1" fill="#5a5a5e"/><rect x="434" y="4" width="1" height="1" fill="#5a5a5e"/><rect x="438" y="4" width="1" height="1" fill="#5a5a5e"/><rect x="442" y="4" width="1" height="1" fill="#5a5a5e"/><rect x="446" y="4" width="1" height="1" fill="#5a5a5e"/><rect x="450" y="4" width="1" height="1" fill="#5a5a5e"/><rect x="454" y="4" width="1" height="1" fill="#5a5a5e"/><rect x="458" y="4" width="1" height="1" fill="#5a5a5e"/><rect x="462" y="4" width="1" height="1" fill="#5a5a5e"/><rect x="466" y="4" width="1" height="1" fill="#5a5a5e"/><rect x="470" y="4" width="1" height="1" fill="#5a5a5e"/><rect x="474" y="4" width="1" height="1" fill="#5a5a5e"/><rect x="478" y="4" width="1" height="1" fill="#5a5a5e"/><rect x="482" y="4" width="1" height="1" fill="#5a5a5e"/><rect x="486" y="4" width="1" height="1" fill="#5a5a5e"/><rect x="490" y="4" width="1" height="1" fill="#5a5a5e"/><rect x="494" y="4" width="1" height="1" fill="#5a5a5e"/><rect x="498" y="4" width="1" height="1" fill="#5a5a5e"/><rect x="502" y="4" width="1" height="1" fill="#5a5a5e"/><rect x="506" y="4" width="1" height="1" fill="#5a5a5e"/><rect x="510" y="4" width="1" height="1" fill="#5a5a5e"/><rect x="514" y="4" width="1" height="1" fill="#5a5a5e"/><rect x="518" y="4" width="1" height="1" fill="#5a5a5e"/><rect x="522" y="4" width="1" height="1" fill="#5a5a5e"/><rect x="526" y="4" width="1" height="1" fill="#5a5a5e"/><rect x="530" y="4" width="1" height="1" fill="#5a5a5e"/><rect x="534" y="4" width="1" height="1" fill="#5a5a5e"/><rect x="538" y="4" width="1" height="1" fill="#5a5a5e"/><rect x="542" y="4" width="1" height="1" fill="#5a5a5e"/><rect x="546" y="4" width="1" height="1" fill="#5a5a5e"/><rect x="550" y="4" width="1" height="1" fill="#5a5a5e"/><rect x="554" y="4" width="1" height="1" fill="#5a5a5e"/><rect x="558" y="4" width="1" height="1" fill="#5a5a5e"/><rect x="562" y="4" width="1" height="1" fill="#5a5a5e"/><rect x="566" y="4" width="1" height="1" fill="#5a5a5e"/><rect x="570" y="4" width="1" height="1" fill="#5a5a5e"/><rect x="574" y="4" width="1" height="1" fill="#5a5a5e"/><rect x="578" y="4" width="1" height="1" fill="#5a5a5e"/><rect x="582" y="4" width="1" height="1" fill="#5a5a5e"/><rect x="586" y="4" width="1" height="1" fill="#5a5a5e"/><rect x="590" y="4" width="1" height="1" fill="#5a5a5e"/><rect x="594" y="4" width="1" height="1" fill="#5a5a5e"/><rect x="598" y="4" width="1" height="1" fill="#5a5a5e"/><rect x="602" y="4" width="1" height="1" fill="#5a5a5e"/><rect x="606" y="4" width="1" height="1" fill="#5a5a5e"/><rect x="610" y="4" width="1" height="1" fill="#5a5a5e"/><rect x="614" y="4" width="1" height="1" fill="#5a5a5e"/><rect x="618" y="4" width="1" height="1" fill="#5a5a5e"/><rect x="622" y="4" width="1" height="1" fill="#5a5a5e"/><rect x="626" y="4" width="1" height="1" fill="#5a5a5e"/><rect x="630" y="4" width="1" height="1" fill="#5a5a5e"/><rect x="634" y="4" width="1" height="1" fill="#5a5a5e"/><rect x="638" y="4" width="1" height="1" fill="#5a5a5e"/><rect x="642" y="4" width="1" height="1" fill="#5a5a5e"/><rect x="646" y="4" width="1" height="1" fill="#5a5a5e"/><rect x="650" y="4" width="1" height="1" fill="#5a5a5e"/><rect x="654" y="4" width="1" height="1" fill="#5a5a5e"/><rect x="658" y="4" width="1" height="1" fill="#5a5a5e"/><rect x="662" y="4" width="1" height="1" fill="#5a5a5e"/><rect x="666" y="4" width="1" height="1" fill="#5a5a5e"/><rect x="670" y="4" width="1" height="1" fill="#5a5a5e"/><rect x="674" y="4" width="1" height="1" fill="#5a5a5e"/><rect x="678" y="4" width="1" height="1" fill="#5a5a5e"/></svg>
<svg class="a" style="left:1609px;top:827px;" width="8" height="4" viewBox="0 0 8 4"><path d="M0 0H8L4.0 4.0Z" fill="#f1f1f1"/></svg>
<svg class="a" style="left:1627px;top:823px;" width="8" height="12" viewBox="0 0 8 12"><path d="M1.5 0.5H6.5V6.5H1.5Z" fill="none" stroke="#f1f1f1"/><rect x="4" y="1" width="1" height="6" fill="#f1f1f1"/><rect x="0" y="6" width="8" height="1.5" fill="#f1f1f1"/><rect x="3.5" y="7" width="1.2" height="5" fill="#f1f1f1"/></svg>
<svg class="a" style="left:1644px;top:825px;" width="9" height="9" viewBox="0 0 9 9"><path d="M0.5 0.5L8.5 8.5M8.5 0.5L0.5 8.5" stroke="#f1f1f1" stroke-width="1.6"/></svg>
<svg class="a" style="left:1633px;top:83px;" width="8" height="4" viewBox="0 0 8 4"><path d="M0 0H8L4.0 4.0Z" fill="#f1f1f1"/></svg>
<svg class="a" style="left:1650px;top:78px;" width="11" height="11" viewBox="0 0 11 11"><g transform="translate(5.5 5.5)" fill="#f1f1f1"><circle r="3.6"/><rect x="-1.1" y="-5.5" width="2.2" height="3" transform="rotate(0)"/><rect x="-1.1" y="-5.5" width="2.2" height="3" transform="rotate(45)"/><rect x="-1.1" y="-5.5" width="2.2" height="3" transform="rotate(90)"/><rect x="-1.1" y="-5.5" width="2.2" height="3" transform="rotate(135)"/><rect x="-1.1" y="-5.5" width="2.2" height="3" transform="rotate(180)"/><rect x="-1.1" y="-5.5" width="2.2" height="3" transform="rotate(225)"/><rect x="-1.1" y="-5.5" width="2.2" height="3" transform="rotate(270)"/><rect x="-1.1" y="-5.5" width="2.2" height="3" transform="rotate(315)"/><circle r="1.4" fill="#2d2d30"/></g></svg>
<svg class="a" style="left:345px;top:82px;" width="9" height="7" viewBox="0 0 9 7"><path d="M0 3.5H3M3 0.5V6.5M3 1.5H8V5.5H3" fill="none" stroke="#fff" stroke-width="1"/></svg>
<svg class="a" style="left:363px;top:81px;" width="10" height="10" viewBox="0 0 10 10"><path d="M0.5 0.5L9.5 9.5M9.5 0.5L0.5 9.5" stroke="#fff" stroke-width="1.6"/></svg>
<svg class="a" style="left:1080px;top:8px;" width="14" height="14" viewBox="0 0 14 14"><circle cx="9" cy="5" r="3.8" fill="none" stroke="#f1f1f1" stroke-width="1.8"/><path d="M6.3 7.7L1 13" stroke="#f1f1f1" stroke-width="2.2"/></svg>
<svg class="a" style="left:198px;top:100px;" width="14" height="14" viewBox="0 0 14 14"><circle cx="9" cy="5" r="3.8" fill="none" stroke="#f1f1f1" stroke-width="1.8"/><path d="M6.3 7.7L1 13" stroke="#f1f1f1" stroke-width="2.2"/></svg>
<svg class="a" style="left:1885px;top:128px;" width="14" height="14" viewBox="0 0 14 14"><circle cx="9" cy="5" r="3.8" fill="none" stroke="#f1f1f1" stroke-width="1.8"/><path d="M6.3 7.7L1 13" stroke="#f1f1f1" stroke-width="2.2"/></svg>
<svg class="a" style="left:1633px;top:845px;" width="14" height="14" viewBox="0 0 14 14"><circle cx="9" cy="5" r="3.8" fill="none" stroke="#f1f1f1" stroke-width="1.8"/><path d="M6.3 7.7L1 13" stroke="#f1f1f1" stroke-width="2.2"/></svg>
<svg class="a" style="left:216px;top:106px;" width="6" height="3" viewBox="0 0 6 3"><path d="M0 0H6L3.0 3.0Z" fill="#f1f1f1"/></svg>
<svg class="a" style="left:1904px;top:134px;" width="6" height="3" viewBox="0 0 6 3"><path d="M0 0H6L3.0 3.0Z" fill="#f1f1f1"/></svg>
<svg class="a" style="left:1651px;top:851px;" width="6" height="3" viewBox="0 0 6 3"><path d="M0 0H6L3.0 3.0Z" fill="#f1f1f1"/></svg>
<svg class="a" style="left:26px;top:40px;" width="12" height="12" viewBox="0 0 12 12"><circle cx="6" cy="6" r="6" fill="#75beff"/><path d="M9.5 6H3.5M6 3.2L3.2 6L6 8.8" fill="none" stroke="#1e1e1e" stroke-width="1.6"/></svg>
<svg class="a" style="left:45px;top:45px;" width="6" height="3" viewBox="0 0 6 3"><path d="M0 0H6L3.0 3.0Z" fill="#999"/></svg>
<svg class="a" style="left:60px;top:41px;" width="12" height="12" viewBox="0 0 12 12"><circle cx="6" cy="6" r="6" fill="#555"/><path d="M2.5 6H8.5M6 3.2L8.8 6L6 8.8" fill="none" stroke="#2d2d30" stroke-width="1.6"/></svg>
<div class="a" style="left:81px;top:36px;width:1px;height:21px;background:#46464a;"></div>
<svg class="a" style="left:89px;top:38px;" width="16" height="17" viewBox="0 0 16 17"><path d="M8.5 6.5V2.5H12.5L14.5 4.5V10" fill="none" stroke="#d0d0d0" stroke-width="1.2"/><path d="M2.5 8.5V13.5H4.5" fill="none" stroke="#d0d0d0" stroke-width="1.2"/><path d="M5.5 6.5H10.5L13.5 9.5V14.5H5.5Z" fill="#2d2d30" stroke="#d0d0d0" stroke-width="1.2"/><g transform="translate(4.4 4.4)" stroke="#f5c77e" stroke-width="1.3"><path d="M0 -4V4M-4 0H4"/><path d="M-2.8 -2.8L-1.7 -1.7M2.8 -2.8L1.7 -1.7M-2.8 2.8L-1.7 1.7M2.8 2.8L1.7 1.7"/></g><circle cx="4.4" cy="4.4" r="0.9" fill="#2d2d30"/></svg>
<svg class="a" style="left:111px;top:45px;" width="6" height="3" viewBox="0 0 6 3"><path d="M0 0H6L3.0 3.0Z" fill="#999"/></svg>
<svg class="a" style="left:124px;top:40px;" width="14" height="15" viewBox="0 0 14 15"><path d="M0.5 7.5H5.5L6.5 6.5H13.5V14.5H0.5Z" fill="#dcb67a"/><path d="M0.5 9.5H14L12.5 14.5H0.5Z" fill="#dcb67a" stroke="#c09553" stroke-width="0.6"/><path d="M2 8C2 5 4 3.5 7.5 3.5M6 1L8.5 3.5L6 6" fill="none" stroke="#75beff" stroke-width="1.5"/></svg>
<svg class="a" style="left:147px;top:41px;" width="13" height="13" viewBox="0 0 13 13"><path d="M0 0H10L13 3V13H0Z" fill="#75beff"/><rect x="3" y="0" width="6" height="5" fill="#2d2d30"/><rect x="6" y="1" width="2" height="3" fill="#75beff"/></svg>
<svg class="a" style="left:168px;top:40px;" width="15" height="15" viewBox="0 0 15 15"><path d="M6 0H13L15 2V9H6Z" fill="#75beff"/><rect x="8" y="0" width="4" height="3.5" fill="#2d2d30"/><rect x="10" y="0.8" width="1.2" height="2" fill="#75beff"/><path d="M0 6H7L9 8V15H0Z" fill="#75beff" stroke="#2d2d30" stroke-width="0.8"/><rect x="2" y="6.4" width="4" height="3.5" fill="#2d2d30"/><rect x="4" y="7.2" width="1.2" height="2" fill="#75beff"/></svg>
<div class="a" style="left:190px;top:36px;width:1px;height:21px;background:#46464a;"></div>
<svg class="a" style="left:198px;top:40px;" width="14" height="14" viewBox="0 0 14 14"><path d="M1 1V6H6" fill="none" stroke="#75beff" stroke-width="1.8"/><path d="M1.5 5.5C4 2.5 8.5 1.5 11 4C13.5 6.5 12 9.5 5.5 13.5" fill="none" stroke="#75beff" stroke-width="1.8"/></svg>
<svg class="a" style="left:220px;top:45px;" width="6" height="3" viewBox="0 0 6 3"><path d="M0 0H6L3.0 3.0Z" fill="#999"/></svg>
<svg class="a" style="left:234px;top:40px;" width="13" height="14" viewBox="0 0 13 14"><path d="M12 1V6H7" fill="none" stroke="#555" stroke-width="1.8"/><path d="M11.5 5.5C9 2.5 4.5 1.5 2 4C-0.5 6.5 1 9.5 7.5 13.5" fill="none" stroke="#555" stroke-width="1.8"/></svg>
<svg class="a" style="left:255px;top:45px;" width="6" height="3" viewBox="0 0 6 3"><path d="M0 0H6L3.0 3.0Z" fill="#999"/></svg>
<div class="a" style="left:268px;top:36px;width:1px;height:21px;background:#46464a;"></div>
<div class="a" style="left:526px;top:36px;width:1px;height:21px;background:#46464a;"></div>
<svg class="a" style="left:534px;top:41px;" width="15" height="13" viewBox="0 0 15 13"><path d="M0 1H5L6 2.5H12V12H0Z" fill="#dcb67a"/><path d="M0 3.5H12" stroke="#c09553" stroke-width="0.8"/><circle cx="9.5" cy="8.5" r="3" fill="#dcb67a" stroke="#75beff" stroke-width="1.6"/><path d="M11.5 10.5L14.5 13" stroke="#75beff" stroke-width="1.8"/></svg>
<div class="a" style="left:556px;top:36px;width:1px;height:21px;background:#46464a;"></div>
<svg class="a" style="left:564px;top:41px;" width="14" height="13" viewBox="0 0 14 13"><rect x="0.5" y="0.5" width="13" height="12" fill="none" stroke="#d0d0d0"/><path d="M3.5 7L7 3.5L10.5 7M4.5 6.5V10.5H9.5V6.5" fill="none" stroke="#75beff" stroke-width="1.3"/><rect x="9.5" y="2" width="1" height="1" fill="#d0d0d0"/><rect x="11" y="2" width="1" height="1" fill="#d0d0d0"/></svg>
<svg class="a" style="left:586px;top:50px;" width="7" height="6" viewBox="0 0 7 6"><rect width="6" height="1" fill="#c8c8c8"/><path d="M0 2.5H6L3 5.5Z" fill="#c8c8c8"/></svg>
<svg class="a" style="left:597px;top:37px;" width="5" height="20" viewBox="0 0 5 20"><rect x="0" y="0" width="1" height="1" fill="#6a6a6a"/><rect x="2" y="2" width="1" height="1" fill="#6a6a6a"/><rect x="0" y="4" width="1" height="1" fill="#6a6a6a"/><rect x="2" y="6" width="1" height="1" fill="#6a6a6a"/><rect x="0" y="8" width="1" height="1" fill="#6a6a6a"/><rect x="2" y="10" width="1" height="1" fill="#6a6a6a"/><rect x="0" y="12" width="1" height="1" fill="#6a6a6a"/><rect x="2" y="14" width="1" height="1" fill="#6a6a6a"/><rect x="0" y="16" width="1" height="1" fill="#6a6a6a"/><rect x="2" y="18" width="1" height="1" fill="#6a6a6a"/></svg>
<svg class="a" style="left:609px;top:40px;" width="14" height="14" viewBox="0 0 14 14"><rect x="4" y="0" width="2" height="14" fill="#5a5a5a"/><rect x="0" y="4" width="14" height="2" fill="#5a5a5a"/><rect x="7" y="8" width="4" height="4" fill="#5a5a5a"/></svg>
<div class="a" style="left:631px;top:36px;width:1px;height:21px;background:#46464a;"></div>
<svg class="a" style="left:639px;top:40px;" width="14" height="14" viewBox="0 0 14 14"><rect x="0" y="0" width="1.5" height="14" fill="#5a5a5a"/><rect x="2" y="3" width="12" height="2" fill="#5a5a5a"/><rect x="2" y="9" width="9" height="2" fill="#5a5a5a"/></svg>
<svg class="a" style="left:662px;top:40px;" width="11" height="14" viewBox="0 0 11 14"><rect x="5" y="0" width="1" height="14" fill="#5a5a5a"/><rect x="0" y="3" width="11" height="2" fill="#5a5a5a"/><rect x="1" y="9" width="9" height="2" fill="#5a5a5a"/></svg>
<svg class="a" style="left:683px;top:40px;" width="14" height="14" viewBox="0 0 14 14"><rect x="12.5" y="0" width="1.5" height="14" fill="#5a5a5a"/><rect x="0" y="3" width="12" height="2" fill="#5a5a5a"/><rect x="3" y="9" width="9" height="2" fill="#5a5a5a"/></svg>
<svg class="a" style="left:705px;top:40px;" width="14" height="14" viewBox="0 0 14 14"><rect x="0" y="0" width="14" height="1.5" fill="#5a5a5a"/><rect x="3" y="2" width="2" height="12" fill="#5a5a5a"/><rect x="9" y="2" width="2" height="7" fill="#5a5a5a"/></svg>
<svg class="a" style="left:727px;top:41px;" width="14" height="12" viewBox="0 0 14 12"><rect x="0" y="6" width="14" height="1" fill="#5a5a5a"/><rect x="3" y="1" width="2" height="11" fill="#5a5a5a"/><rect x="9" y="2" width="2" height="9" fill="#5a5a5a"/></svg>
<svg class="a" style="left:749px;top:40px;" width="14" height="14" viewBox="0 0 14 14"><rect x="0" y="12.5" width="14" height="1.5" fill="#5a5a5a"/><rect x="4" y="0" width="2" height="12" fill="#5a5a5a"/><rect x="10" y="3" width="2" height="9" fill="#5a5a5a"/></svg>
<div class="a" style="left:771px;top:36px;width:1px;height:21px;background:#46464a;"></div>
<svg class="a" style="left:779px;top:41px;" width="14" height="11" viewBox="0 0 14 11"><rect x="0" y="0" width="1.5" height="11" fill="#5a5a5a"/><rect x="12.5" y="0" width="1.5" height="11" fill="#5a5a5a"/><path d="M7 2V9M4 3.5L10 7.5M10 3.5L4 7.5" stroke="#5a5a5a" stroke-width="1.6"/></svg>
<svg class="a" style="left:802px;top:40px;" width="13" height="14" viewBox="0 0 13 14"><rect x="0" y="0" width="13" height="1.5" fill="#5a5a5a"/><rect x="0" y="12.5" width="13" height="1.5" fill="#5a5a5a"/><rect x="6" y="1" width="1" height="12" fill="#5a5a5a"/><circle cx="6.5" cy="4" r="1" fill="#5a5a5a"/><circle cx="6.5" cy="10" r="1" fill="#5a5a5a"/></svg>
<svg class="a" style="left:823px;top:40px;" width="14" height="14" viewBox="0 0 14 14"><path d="M1 1L5 5M1 1H4M1 1V4M13 1L9 5M13 1H10M13 1V4M1 13L5 9M1 13H4M1 13V10M13 13L9 9M13 13H10M13 13V10" fill="none" stroke="#5a5a5a" stroke-width="1.2"/></svg>
<svg class="a" style="left:846px;top:40px;" width="13" height="14" viewBox="0 0 13 14"><rect x="3" y="0" width="7" height="1.5" fill="#5a5a5a"/><rect x="3" y="11.5" width="7" height="1.5" fill="#5a5a5a"/><rect x="0" y="3" width="1.5" height="8" fill="#5a5a5a"/><rect x="11.5" y="3" width="1.5" height="8" fill="#5a5a5a"/><circle cx="6.5" cy="6.5" r="3" fill="none" stroke="#5a5a5a" stroke-width="1.3"/><path d="M8.5 8.5L12 12" stroke="#5a5a5a" stroke-width="1.3"/></svg>
<div class="a" style="left:867px;top:36px;width:1px;height:21px;background:#46464a;"></div>
<svg class="a" style="left:876px;top:40px;" width="12" height="14" viewBox="0 0 12 14"><rect x="0" y="3" width="2.5" height="7" fill="#5a5a5a"/><rect x="7" y="3" width="2.5" height="7" fill="#5a5a5a"/><rect x="1" y="0" width="1" height="14" fill="#5a5a5a" opacity=".7"/><rect x="8" y="0" width="1" height="14" fill="#5a5a5a" opacity=".7"/></svg>
<svg class="a" style="left:897px;top:42px;" width="14" height="10" viewBox="0 0 14 10"><rect x="3" y="1" width="7" height="2.5" fill="#5a5a5a"/><rect x="3" y="7" width="7" height="2.5" fill="#5a5a5a"/><rect x="0" y="2" width="14" height="1" fill="#5a5a5a" opacity=".7"/><rect x="0" y="8" width="14" height="1" fill="#5a5a5a" opacity=".7"/></svg>
<div class="a" style="left:919px;top:36px;width:1px;height:21px;background:#46464a;"></div>
<svg class="a" style="left:927px;top:40px;" width="14" height="14" viewBox="0 0 14 14"><rect x="3.5" y="4.5" width="6" height="6" fill="none" stroke="#5a5a5a" stroke-width="2"/><path d="M8 0.5H13.5V6M0.5 8V13.5H6" fill="none" stroke="#5a5a5a" stroke-width="1.5"/></svg>
<svg class="a" style="left:950px;top:41px;" width="12" height="12" viewBox="0 0 12 12"><rect x="0.5" y="0.5" width="3" height="3" fill="none" stroke="#5a5a5a"/><rect x="8.5" y="8.5" width="3" height="3" fill="none" stroke="#5a5a5a"/><rect x="3" y="3" width="6" height="6" fill="#5a5a5a"/></svg>
<svg class="a" style="left:971px;top:50px;" width="7" height="6" viewBox="0 0 7 6"><rect width="6" height="1" fill="#c8c8c8"/><path d="M0 2.5H6L3 5.5Z" fill="#c8c8c8"/></svg>
<svg class="a" style="left:1781px;top:42px;" width="15" height="14" viewBox="0 0 15 14"><path d="M0.5 5V13.5H12.5V10" fill="none" stroke="#d0d0d0"/><path d="M3 11C3 6 6 4 10 4V1.5L14 5.5L10 9.5V7C7 7 4.5 8 3 11Z" fill="none" stroke="#d0d0d0"/></svg>
<svg class="a" style="left:1885px;top:39px;" width="15" height="15" viewBox="0 0 15 15"><circle cx="5" cy="8" r="2.8" fill="none" stroke="#d0d0d0" stroke-width="1.2"/><path d="M0.5 14.5C1 11.5 2.5 10.5 5 10.5C7.5 10.5 9 11.5 9.5 14.5" fill="none" stroke="#d0d0d0" stroke-width="1.2"/><path d="M6.5 0.5H14.5V6.5H10L8.5 8V6.5H6.5Z" fill="none" stroke="#d0d0d0"/></svg>
<svg class="a" style="left:55px;top:146px;" width="14" height="14" viewBox="0 0 14 14"><path d="M4 0V11L6.5 8.5L8.5 13L10 12.3L8 8H11.5Z" fill="#c5c5c5" stroke="#1b1b1c" stroke-width=".6"/></svg>
<svg class="a" style="left:55px;top:168px;" width="14" height="14" viewBox="0 0 14 14"><rect x="3.5" y="0.5" width="10" height="5" fill="none" stroke="#c5c5c5"/><rect x="5" y="2" width="6" height="2" fill="#c5c5c5"/><rect x="0" y="5" width="8" height="9" fill="#c5c5c5"/></svg>
<svg class="a" style="left:55px;top:190px;" width="14" height="14" viewBox="0 0 14 14"><rect x="0" y="6" width="7" height="8" rx="2" fill="#83c4ff"/><rect x="1" y="7" width="5" height="1" fill="#252526" opacity=".6"/><rect x="6" y="0" width="3" height="4" fill="#c5c5c5"/><rect x="10" y="0" width="4" height="5" fill="#c5c5c5"/><path d="M11 1V4L13 2.5Z" fill="#252526"/></svg>
<svg class="a" style="left:55px;top:212px;" width="14" height="14" viewBox="0 0 14 14"><rect x="0" y="6" width="7" height="8" rx="2" fill="#83c4ff"/><rect x="1" y="7" width="5" height="1" fill="#252526" opacity=".6"/><path d="M6.5 2.5H9.5M9.5 8V10.5H7.5M10.5 3V9" fill="none" stroke="#c5c5c5"/><rect x="10" y="0" width="4" height="4" fill="#c5c5c5"/></svg>
<svg class="a" style="left:55px;top:234px;" width="14" height="14" viewBox="0 0 14 14"><rect x="0.5" y="1.5" width="13" height="10" rx="2" fill="none" stroke="#c5c5c5"/><text x="7" y="9.5" font-family="Liberation Sans" font-size="7.5" font-weight="700" fill="#c5c5c5" text-anchor="middle">ab</text></svg>
<svg class="a" style="left:55px;top:256px;" width="14" height="14" viewBox="0 0 14 14"><rect x="0.5" y="0.5" width="13" height="13" fill="none" stroke="#c5c5c5"/><path d="M3.5 7L6 10.5L10.5 3" fill="none" stroke="#c5c5c5" stroke-width="1.3"/></svg>
<svg class="a" style="left:55px;top:278px;" width="14" height="14" viewBox="0 0 14 14"><rect x="0.5" y="0.5" width="3" height="3" fill="none" stroke="#c5c5c5"/><rect x="0.5" y="5.5" width="3" height="3" fill="none" stroke="#c5c5c5"/><rect x="0.5" y="10.5" width="3" height="3" fill="none" stroke="#c5c5c5"/><rect x="5" y="1" width="9" height="2" fill="#c5c5c5"/><rect x="5" y="6" width="9" height="2" fill="#c5c5c5"/><rect x="5" y="11" width="9" height="2" fill="#c5c5c5"/></svg>
<svg class="a" style="left:55px;top:300px;" width="14" height="14" viewBox="0 0 14 14"><path d="M0.5 12V0.5H4M13.5 6V12.5H11" fill="none" stroke="#c5c5c5"/><rect x="0" y="0" width="4" height="2" fill="#c5c5c5"/><path d="M3 11L9 5L10 6L4 12Z" fill="none" stroke="#c5c5c5"/><path d="M9 3L12 1L13 2L11 5Z" fill="#c5c5c5"/><rect x="1" y="13" width="2" height="1.5" fill="#f44"/><rect x="5" y="13" width="2" height="1.5" fill="#4c4"/><rect x="9" y="13" width="2" height="1.5" fill="#4af"/></svg>
<svg class="a" style="left:55px;top:322px;" width="14" height="14" viewBox="0 0 14 14"><rect x="0.5" y="0.5" width="13" height="13" fill="none" stroke="#c5c5c5"/><rect x="0" y="0" width="14" height="4" fill="#83c4ff"/><path d="M9.5 1.5H12.5L11 3Z" fill="#252526"/><rect x="3" y="6" width="6" height="1" fill="#c5c5c5"/><rect x="3" y="8" width="8" height="1" fill="#c5c5c5"/><rect x="3" y="10" width="5" height="1" fill="#c5c5c5"/></svg>
<svg class="a" style="left:55px;top:344px;" width="14" height="14" viewBox="0 0 14 14"><path d="M4.5 2.5H13.5V13.5H0.5V6" fill="none" stroke="#c5c5c5"/><path d="M1 0V5L2.3 3.8L3.5 6L4.3 5.5L3.3 3.5H5Z" fill="#c5c5c5"/><rect x="5" y="6" width="6" height="1" fill="#c5c5c5"/><rect x="5" y="8" width="6" height="1" fill="#c5c5c5"/><rect x="5" y="10" width="6" height="1" fill="#c5c5c5"/></svg>
<svg class="a" style="left:55px;top:366px;" width="14" height="14" viewBox="0 0 14 14"><rect x="0" y="6" width="7" height="8" rx="2" fill="#83c4ff"/><rect x="1" y="7" width="5" height="1" fill="#252526" opacity=".6"/><rect x="7.0" y="0.0" width="2" height="2" fill="#c5c5c5"/><rect x="7.0" y="2.5" width="2" height="2" fill="#c5c5c5"/><rect x="7.0" y="5.0" width="2" height="2" fill="#c5c5c5"/><rect x="9.5" y="0.0" width="2" height="2" fill="#c5c5c5"/><rect x="9.5" y="2.5" width="2" height="2" fill="#c5c5c5"/><rect x="9.5" y="5.0" width="2" height="2" fill="#c5c5c5"/><rect x="12.0" y="0.0" width="2" height="2" fill="#c5c5c5"/><rect x="12.0" y="2.5" width="2" height="2" fill="#c5c5c5"/><rect x="12.0" y="5.0" width="2" height="2" fill="#c5c5c5"/></svg>
<svg class="a" style="left:55px;top:388px;" width="14" height="14" viewBox="0 0 14 14"><rect x="0" y="6" width="7" height="8" rx="2" fill="#83c4ff"/><rect x="1" y="7" width="5" height="1" fill="#252526" opacity=".6"/><rect x="7" y="1" width="7" height="8" rx="2" fill="#83c4ff"/><rect x="8" y="2" width="5" height="1" fill="#252526" opacity=".6"/></svg>
<svg class="a" style="left:55px;top:410px;" width="14" height="14" viewBox="0 0 14 14"><rect x="0.5" y="0.5" width="13" height="13" fill="none" stroke="#c5c5c5"/><rect x="0" y="0" width="14" height="3" fill="#c5c5c5"/><path d="M4 1.5L2.5 1.5M10 1.5H11.5" stroke="#252526"/><rect x="2.0" y="5.0" width="1.5" height="1.5" fill="#c5c5c5"/><rect x="2.0" y="7.5" width="1.5" height="1.5" fill="#c5c5c5"/><rect x="2.0" y="10.0" width="1.5" height="1.5" fill="#c5c5c5"/><rect x="4.5" y="5.0" width="1.5" height="1.5" fill="#c5c5c5"/><rect x="4.5" y="7.5" width="1.5" height="1.5" fill="#c5c5c5"/><rect x="4.5" y="10.0" width="1.5" height="1.5" fill="#c5c5c5"/><rect x="7.0" y="5.0" width="1.5" height="1.5" fill="#c5c5c5"/><rect x="7.0" y="7.5" width="1.5" height="1.5" fill="#c5c5c5"/><rect x="7.0" y="10.0" width="1.5" height="1.5" fill="#c5c5c5"/><rect x="9.5" y="5.0" width="1.5" height="1.5" fill="#c5c5c5"/><rect x="9.5" y="7.5" width="1.5" height="1.5" fill="#c5c5c5"/><rect x="9.5" y="10.0" width="1.5" height="1.5" fill="#c5c5c5"/></svg>
<svg class="a" style="left:55px;top:432px;" width="14" height="14" viewBox="0 0 14 14"><path d="M0.5 6V0.5H13.5V12.5H8" fill="none" stroke="#c5c5c5"/><rect x="0" y="0" width="14" height="2" fill="#c5c5c5"/><path d="M2 8L5 6L5 10ZM8 11L5 13L5 9Z" fill="#e8a33d"/><path d="M4 8H7M5 11H2" stroke="#e8a33d"/></svg>
<svg class="a" style="left:55px;top:454px;" width="14" height="14" viewBox="0 0 14 14"><circle cx="9" cy="5" r="4.3" fill="none" stroke="#c5c5c5"/><path d="M6 8L0.5 13.5" stroke="#c5c5c5" stroke-width="1.4"/></svg>
<svg class="a" style="left:55px;top:476px;" width="14" height="14" viewBox="0 0 14 14"><rect x="0.5" y="0.5" width="13" height="13" fill="none" stroke="#c5c5c5"/><rect x="9" y="0" width="1" height="14" fill="#c5c5c5"/><path d="M10 5H13.5L11.8 3ZM10 9H13.5L11.8 11Z" fill="#c5c5c5"/></svg>
<svg class="a" style="left:55px;top:498px;" width="14" height="14" viewBox="0 0 14 14"><circle cx="7" cy="7" r="7" fill="#c5c5c5"/><path d="M4.2 4.2L9.8 9.8M9.8 4.2L4.2 9.8" stroke="#252526" stroke-width="1.8"/></svg>
<svg class="a" style="left:55px;top:520px;" width="14" height="14" viewBox="0 0 14 14"><path d="M1.5 0.5H12.5V13.5H1.5Z" fill="none" stroke="#c5c5c5"/><path d="M8 2L4.5 7.5H7L6 12L9.5 6H7Z" fill="#c5c5c5"/><rect x="2.5" y="2" width="1" height="1" fill="#c5c5c5"/><rect x="2.5" y="4" width="1" height="1" fill="#c5c5c5"/></svg>
<svg class="a" style="left:55px;top:542px;" width="14" height="14" viewBox="0 0 14 14"><path d="M0.5 8V0.5H13.5V12.5" fill="none" stroke="#c5c5c5"/><rect x="0" y="0" width="14" height="2.5" fill="#c5c5c5"/><circle cx="3.5" cy="11" r="2.5" fill="none" stroke="#c5c5c5"/><circle cx="9.5" cy="11" r="2.5" fill="none" stroke="#c5c5c5"/><path d="M6 11H7M1.5 9L4 5M11.5 9L9 5" stroke="#c5c5c5"/></svg>
<svg class="a" style="left:55px;top:564px;" width="14" height="14" viewBox="0 0 14 14"><rect x="0" y="0" width="1" height="1" fill="#c5c5c5"/><rect x="0" y="13" width="1" height="1" fill="#c5c5c5"/><rect x="0" y="0" width="1" height="1" fill="#c5c5c5"/><rect x="13" y="0" width="1" height="1" fill="#c5c5c5"/><rect x="2" y="0" width="1" height="1" fill="#c5c5c5"/><rect x="2" y="13" width="1" height="1" fill="#c5c5c5"/><rect x="0" y="2" width="1" height="1" fill="#c5c5c5"/><rect x="13" y="2" width="1" height="1" fill="#c5c5c5"/><rect x="4" y="0" width="1" height="1" fill="#c5c5c5"/><rect x="4" y="13" width="1" height="1" fill="#c5c5c5"/><rect x="0" y="4" width="1" height="1" fill="#c5c5c5"/><rect x="13" y="4" width="1" height="1" fill="#c5c5c5"/><rect x="6" y="0" width="1" height="1" fill="#c5c5c5"/><rect x="6" y="13" width="1" height="1" fill="#c5c5c5"/><rect x="0" y="6" width="1" height="1" fill="#c5c5c5"/><rect x="13" y="6" width="1" height="1" fill="#c5c5c5"/><rect x="8" y="0" width="1" height="1" fill="#c5c5c5"/><rect x="8" y="13" width="1" height="1" fill="#c5c5c5"/><rect x="0" y="8" width="1" height="1" fill="#c5c5c5"/><rect x="13" y="8" width="1" height="1" fill="#c5c5c5"/><rect x="10" y="0" width="1" height="1" fill="#c5c5c5"/><rect x="10" y="13" width="1" height="1" fill="#c5c5c5"/><rect x="0" y="10" width="1" height="1" fill="#c5c5c5"/><rect x="13" y="10" width="1" height="1" fill="#c5c5c5"/><rect x="12" y="0" width="1" height="1" fill="#c5c5c5"/><rect x="12" y="13" width="1" height="1" fill="#c5c5c5"/><rect x="0" y="12" width="1" height="1" fill="#c5c5c5"/><rect x="13" y="12" width="1" height="1" fill="#c5c5c5"/><rect x="3" y="3" width="4" height="3" fill="#c5c5c5"/><rect x="8" y="3" width="3" height="3" fill="#c5c5c5"/><rect x="3" y="7" width="3" height="3" fill="#c5c5c5"/></svg>
<svg class="a" style="left:55px;top:586px;" width="14" height="14" viewBox="0 0 14 14"><path d="M0.5 4V0.5H13.5V12.5H11" fill="none" stroke="#c5c5c5"/><rect x="0" y="0" width="14" height="2" fill="#c5c5c5"/><path d="M0 5H4L5 6H10V13H0Z" fill="#c5c5c5"/></svg>
<svg class="a" style="left:55px;top:608px;" width="14" height="14" viewBox="0 0 14 14"><rect x="0.5" y="0.5" width="13" height="12" fill="none" stroke="#c5c5c5"/><rect x="0" y="0" width="14" height="2" fill="#c5c5c5"/><path d="M2 11L5 4L7 11M3 9H6" fill="none" stroke="#c5c5c5"/><rect x="8" y="5" width="4" height="1" fill="#c5c5c5"/><rect x="8" y="7" width="4" height="1" fill="#c5c5c5"/><rect x="8" y="9" width="4" height="1" fill="#c5c5c5"/></svg>
<svg class="a" style="left:55px;top:630px;" width="14" height="14" viewBox="0 0 14 14"><path d="M2.5 2.5H0.5V13.5H13.5V2.5H11.5" fill="none" stroke="#c5c5c5"/><text x="7" y="5" font-family="Liberation Sans" font-size="6" font-weight="700" fill="#c5c5c5" text-anchor="middle">XY</text></svg>
<svg class="a" style="left:55px;top:652px;" width="14" height="14" viewBox="0 0 14 14"><rect x="1" y="0" width="12" height="14" fill="#c5c5c5"/><text x="7" y="11" font-family="Liberation Sans" font-size="11" font-weight="700" fill="#252526" text-anchor="middle">?</text></svg>
<svg class="a" style="left:55px;top:674px;" width="14" height="14" viewBox="0 0 14 14"><rect x="0" y="4" width="4" height="6" fill="#c5c5c5"/><path d="M3 5V9L1 7Z" fill="#252526"/><rect x="5" y="4" width="4" height="6" fill="none" stroke="#c5c5c5" transform="translate(.5 .5) scale(.9)"/><rect x="10" y="4" width="4" height="6" fill="#c5c5c5"/><path d="M11 5V9L13 7Z" fill="#252526"/></svg>
<svg class="a" style="left:55px;top:696px;" width="14" height="14" viewBox="0 0 14 14"><path d="M2.5 0.5H13.5V11" fill="none" stroke="#c5c5c5"/><rect x="0.5" y="2.5" width="11" height="11" fill="none" stroke="#c5c5c5"/><path d="M1.5 12L4.5 8L6.5 10L8 8.5L10.5 12" fill="none" stroke="#c5c5c5"/><circle cx="8" cy="5.5" r="1" fill="#c5c5c5"/></svg>
<svg class="a" style="left:55px;top:718px;" width="14" height="14" viewBox="0 0 14 14"><path d="M1 14L6 0H8L13 14H10.5L9.3 10.5H4.7L3.5 14ZM5.4 8.5H8.6L7 3.5Z" fill="#c5c5c5"/></svg>
<svg class="a" style="left:55px;top:740px;" width="14" height="14" viewBox="0 0 14 14"><path d="M2 11L5.8 0H7.8L11.8 11H9.8L8.8 8H4.8L3.8 11ZM5.4 6.3H8.2L6.8 2Z" fill="#c5c5c5"/><rect x="1" y="12.5" width="12" height="1.5" fill="#c5c5c5"/></svg>
<svg class="a" style="left:55px;top:762px;" width="14" height="14" viewBox="0 0 14 14"><rect x="0.5" y="0.5" width="13" height="13" fill="none" stroke="#c5c5c5"/><rect x="9" y="1" width="4.5" height="12" fill="#83c4ff"/><path d="M9.8 5H12.8L11.3 3ZM9.8 9H12.8L11.3 11Z" fill="#252526"/><rect x="2" y="3" width="5" height="1.5" fill="#c5c5c5"/><rect x="2" y="6" width="6" height="1.5" fill="#c5c5c5"/><rect x="2" y="9" width="4" height="1.5" fill="#c5c5c5"/></svg>
<svg class="a" style="left:55px;top:784px;" width="14" height="14" viewBox="0 0 14 14"><rect x="0" y="0" width="2" height="2" fill="#c5c5c5"/><rect x="4" y="0" width="2" height="2" fill="#c5c5c5"/><rect x="8" y="0" width="2" height="2" fill="#c5c5c5"/><rect x="12" y="0" width="2" height="2" fill="#c5c5c5"/><rect x="0" y="4" width="2" height="2" fill="#c5c5c5"/><rect x="4" y="4" width="2" height="2" fill="#c5c5c5"/><rect x="8" y="4" width="2" height="2" fill="#c5c5c5"/><rect x="0" y="8" width="2" height="2" fill="#c5c5c5"/><rect x="4" y="8" width="2" height="2" fill="#c5c5c5"/><rect x="8" y="8" width="5" height="2" fill="#c5c5c5"/><rect x="0" y="12" width="2" height="2" fill="#c5c5c5"/><rect x="4" y="12" width="2" height="2" fill="#c5c5c5"/></svg>
<svg class="a" style="left:55px;top:806px;" width="14" height="14" viewBox="0 0 14 14"><text x="0" y="11" font-family="Liberation Sans" font-size="11" fill="#c5c5c5">(.)</text><rect x="12" y="9" width="2" height="2" fill="#c5c5c5"/></svg>
<svg class="a" style="left:55px;top:828px;" width="14" height="14" viewBox="0 0 14 14"><rect x="0.5" y="3.5" width="13" height="10" fill="none" stroke="#c5c5c5"/><rect x="0" y="0.5" width="7" height="2" fill="#c5c5c5"/><rect x="2" y="6" width="8" height="1.3" fill="#c5c5c5"/><rect x="2" y="9" width="6" height="1.3" fill="#c5c5c5"/></svg>
<svg class="a" style="left:55px;top:850px;" width="14" height="14" viewBox="0 0 14 14"><rect x="0.5" y="4.5" width="9" height="9" fill="none" stroke="#c5c5c5"/><path d="M0.5 4.5L5 9L9.5 4.5" fill="none" stroke="#c5c5c5"/><path d="M3 2.5H11.5V11M5 0.5H13.5V9" fill="none" stroke="#c5c5c5"/></svg>
<svg class="a" style="left:55px;top:872px;" width="14" height="14" viewBox="0 0 14 14"><rect x="0.5" y="0.5" width="13" height="13" fill="none" stroke="#c5c5c5"/><rect x="0" y="0" width="14" height="3.5" fill="#c5c5c5"/><rect x="2.0" y="5.5" width="1.5" height="1.5" fill="#c5c5c5"/><rect x="2.0" y="8.0" width="1.5" height="1.5" fill="#c5c5c5"/><rect x="2.0" y="10.5" width="1.5" height="1.5" fill="#c5c5c5"/><rect x="4.5" y="5.5" width="1.5" height="1.5" fill="#c5c5c5"/><rect x="4.5" y="8.0" width="1.5" height="1.5" fill="#c5c5c5"/><rect x="4.5" y="10.5" width="1.5" height="1.5" fill="#c5c5c5"/><rect x="7.0" y="5.5" width="1.5" height="1.5" fill="#c5c5c5"/><rect x="7.0" y="8.0" width="1.5" height="1.5" fill="#c5c5c5"/><rect x="7.0" y="10.5" width="1.5" height="1.5" fill="#c5c5c5"/><rect x="9.5" y="5.5" width="1.5" height="1.5" fill="#c5c5c5"/><rect x="9.5" y="8.0" width="1.5" height="1.5" fill="#c5c5c5"/><rect x="9.5" y="10.5" width="1.5" height="1.5" fill="#c5c5c5"/></svg>
<svg class="a" style="left:55px;top:894px;" width="14" height="14" viewBox="0 0 14 14"><path d="M0.5 0V13.5H13.5" fill="none" stroke="#c5c5c5"/><rect x="4.5" y="8.5" width="6" height="3" fill="none" stroke="#c5c5c5"/></svg>
<svg class="a" style="left:55px;top:916px;" width="14" height="14" viewBox="0 0 14 14"><rect x="0.5" y="0.5" width="13" height="13" fill="none" stroke="#c5c5c5"/><rect x="8" y="0" width="1" height="14" fill="#c5c5c5"/><text x="2" y="7" font-family="Liberation Sans" font-size="6" fill="#c5c5c5">1</text><text x="2" y="13" font-family="Liberation Sans" font-size="6" fill="#c5c5c5">2</text><path d="M9.5 5.5H13L11.3 3ZM9.5 9H13L11.3 11.5Z" fill="#c5c5c5"/></svg>
<svg class="a" style="left:55px;top:938px;" width="14" height="14" viewBox="0 0 14 14"><path d="M0.5 6V0.5H13.5V12.5H6" fill="none" stroke="#c5c5c5"/><rect x="0" y="0" width="14" height="2" fill="#c5c5c5"/><path d="M1 12C1 9 3 8.5 6 8.5M4.5 7L6.5 8.5L4.5 10" fill="none" stroke="#c5c5c5"/></svg>
<svg class="a" style="left:55px;top:960px;" width="14" height="14" viewBox="0 0 14 14"><rect x="0.5" y="0.5" width="13" height="12" fill="none" stroke="#c5c5c5"/><rect x="0" y="0" width="14" height="2.5" fill="#c5c5c5"/><path d="M2 6H12" stroke="#c5c5c5" stroke-dasharray="1 1"/></svg>
<svg class="a" style="left:42px;top:129px;" width="6" height="6" viewBox="0 0 6 6"><path d="M6 0V6H0Z" fill="#d0d0d0"/></svg>
<svg class="a" style="left:213px;top:127px;" width="9" height="5" viewBox="0 0 9 5"><path d="M0 5H9L4.5 0Z" fill="#999"/></svg>
<svg class="a" style="left:213px;top:967px;" width="9" height="5" viewBox="0 0 9 5"><path d="M0 0H9L4.5 5Z" fill="#999"/></svg>
<svg class="a" style="left:1678px;top:104px;" width="12" height="12" viewBox="0 0 12 12"><circle cx="6" cy="6" r="6" fill="#555"/><path d="M9.5 6H3.5M6 3.2L3.2 6L6 8.8" fill="none" stroke="#2d2d30" stroke-width="1.6"/></svg>
<svg class="a" style="left:1700px;top:104px;" width="12" height="12" viewBox="0 0 12 12"><circle cx="6" cy="6" r="6" fill="#555"/><path d="M2.5 6H8.5M6 3.2L8.8 6L6 8.8" fill="none" stroke="#2d2d30" stroke-width="1.6"/></svg>
<svg class="a" style="left:1721px;top:103px;" width="14" height="14" viewBox="0 0 14 14"><path d="M1 7L7 1L13 7M2.5 5.5V13.5H11.5V5.5M10.5 1.5V4" fill="none" stroke="#d0d0d0" stroke-width="1.2"/><rect x="5.5" y="9" width="3" height="4.5" fill="#d0d0d0"/></svg>
<svg class="a" style="left:1743px;top:103px;" width="15" height="14" viewBox="0 0 15 14"><rect x="5.5" y="0.5" width="9" height="11" fill="#2d2d30" stroke="#d0d0d0"/><path d="M8 3H13M8 5H13M8 7H13M8 9H13" stroke="#d0d0d0"/><path d="M0 8.5L1.5 7.5L4 9.5L7 6.5L8.5 7V13L7 13.5L4 10.5L1.5 12.5L0 11.5Z" fill="#9b4fdb"/></svg>
<div class="a" style="left:1765px;top:100px;width:1px;height:20px;background:#46464a;"></div>
<svg class="a" style="left:1775px;top:103px;" width="14" height="15" viewBox="0 0 14 15"><path d="M0 0H5L2.5 3Z" fill="#d0d0d0"/><rect x="2" y="2" width="1" height="3" fill="#d0d0d0"/><circle cx="8.5" cy="9.5" r="4.8" fill="none" stroke="#d0d0d0" stroke-width="1.2"/><path d="M8.5 6.5V9.5H11" fill="none" stroke="#d0d0d0" stroke-width="1.1"/></svg>
<svg class="a" style="left:1795px;top:109px;" width="6" height="3" viewBox="0 0 6 3"><path d="M0 0H6L3.0 3.0Z" fill="#999"/></svg>
<svg class="a" style="left:1807px;top:103px;" width="15" height="15" viewBox="0 0 15 15"><path d="M2 7C2 4 4 2 7.5 2H11" fill="none" stroke="#75beff" stroke-width="2.4"/><path d="M10 0L14 2.5L10 5Z" fill="#75beff"/><path d="M13 8C13 11 11 13 7.5 13H4" fill="none" stroke="#75beff" stroke-width="2.4"/><path d="M5 10L1 12.5L5 15Z" fill="#75beff"/></svg>
<svg class="a" style="left:1830px;top:103px;" width="14" height="15" viewBox="0 0 14 15"><path d="M10.5 4.5A5 5 0 1 0 12 8.5" fill="none" stroke="#75beff" stroke-width="2.2"/><path d="M8 0L13 3L8 6.5Z" fill="#75beff"/></svg>
<svg class="a" style="left:1853px;top:103px;" width="13" height="13" viewBox="0 0 13 13"><path d="M4.5 2.5V0.5H12.5V8.5H10.5M2.5 4.5V2.5H10.5V10.5H8.5" fill="none" stroke="#d0d0d0"/><rect x="0.5" y="4.5" width="8" height="8" fill="#2d2d30" stroke="#d0d0d0"/><rect x="2.5" y="8" width="4" height="1.2" fill="#75beff"/></svg>
<svg class="a" style="left:1874px;top:103px;" width="15" height="15" viewBox="0 0 15 15"><path d="M3.5 11.5H0.5V0.5H7.5L9 2" fill="none" stroke="#d0d0d0"/><path d="M5.5 3.5H10.5L12.5 5.5" fill="none" stroke="#d0d0d0"/><path d="M3.5 5.5H9.5L13.5 9V14.5H3.5Z" fill="#2d2d30" stroke="#d0d0d0"/><path d="M5.5 9H10M5.5 11H11M5.5 13H11" stroke="#d0d0d0"/></svg>
<svg class="a" style="left:1905px;top:101px;" width="7" height="4" viewBox="0 0 7 4"><path d="M0 0L2.5 2L0 4ZM4 0L6.5 2L4 4Z" fill="#999"/></svg>
<svg class="a" style="left:1684px;top:152px;" width="14" height="14" viewBox="0 0 14 14"><path d="M0.5 6V0.5H13.5V12.5H8" fill="none" stroke="#d0d0d0"/><rect x="0" y="0" width="14" height="2.5" fill="#d0d0d0"/><path d="M0 9L1.5 8L3.5 9.8L6.5 7L8 7.5V13.5L6.5 14L3.5 11.2L1.5 13L0 12Z" fill="#9b4fdb"/></svg>
<svg class="a" style="left:1680px;top:175px;" width="6" height="7" viewBox="0 0 6 7"><path d="M6 0V6H0Z" fill="#d0d0d0"/></svg>
<svg class="a" style="left:1702px;top:172px;" width="14" height="12" viewBox="0 0 14 12"><rect x="0.5" y="0.5" width="13" height="11" fill="none" stroke="#75beff"/><text x="7" y="9" font-family="Liberation Sans" font-size="7.5" fill="#d0d0d0" text-anchor="middle">VB</text></svg>
<svg class="a" style="left:1720px;top:190px;" width="14" height="14" viewBox="0 0 14 14"><path d="M13 3.5A4 4 0 0 1 8 8.5L2 14L0 12L5.5 6A4 4 0 0 1 10.5 1L8 3.5L8.5 5.5L10.5 6Z" fill="#c5c5c5"/></svg>
<svg class="a" style="left:1698px;top:211px;" width="6" height="10" viewBox="0 0 6 10"><path d="M0.5 0.8L5 5L0.5 9.2Z" fill="none" stroke="#d0d0d0"/></svg>
<svg class="a" style="left:1719px;top:211px;" width="15" height="10" viewBox="0 0 15 10"><rect x="4" y="1" width="3" height="3" fill="#d0d0d0"/><rect x="8" y="2" width="2" height="1" fill="#d0d0d0"/><path d="M11 0H15V5H14L13 4H11Z" fill="#d0d0d0"/><rect x="1" y="6" width="3" height="3" fill="#d0d0d0"/><rect x="5" y="7" width="2" height="1" fill="#d0d0d0"/><rect x="8" y="5" width="4" height="5" fill="#d0d0d0"/></svg>
<svg class="a" style="left:1719px;top:228px;" width="15" height="15" viewBox="0 0 15 15"><path d="M3.5 3.5V0.5H10.5L13.5 3.5V13.5H6" fill="none" stroke="#d0d0d0"/><path d="M10.5 0.5V3.5H13.5" fill="none" stroke="#d0d0d0"/><circle cx="3.8" cy="6.8" r="3" fill="#d0d0d0"/><rect x="3" y="3" width="1.6" height="4" fill="#252526"/><rect x="2.8" y="8" width="2" height="6" fill="#d0d0d0"/></svg>
<svg class="a" style="left:1698px;top:249px;" width="6" height="10" viewBox="0 0 6 10"><path d="M0.5 0.8L5 5L0.5 9.2Z" fill="none" stroke="#d0d0d0"/></svg>
<svg class="a" style="left:1720px;top:248px;" width="14" height="12" viewBox="0 0 14 12"><rect x="0.5" y="0.5" width="13" height="11" fill="none" stroke="#d0d0d0"/><rect x="0" y="0" width="14" height="2.5" fill="#d0d0d0"/><rect x="2" y="5" width="3" height="1.5" fill="#d0d0d0"/><rect x="6" y="5" width="6" height="1.5" fill="#d0d0d0"/><rect x="2" y="8" width="3" height="1.5" fill="#d0d0d0"/><rect x="6" y="8" width="6" height="1.5" fill="#d0d0d0"/></svg>
<svg class="a" style="left:1675px;top:508px;" width="5" height="9" viewBox="0 0 5 9"><path d="M5 0V9L0 4.5Z" fill="#999"/></svg>
<svg class="a" style="left:1902px;top:508px;" width="5" height="9" viewBox="0 0 5 9"><path d="M0 0V9L5 4.5Z" fill="#999"/></svg>
<svg class="a" style="left:1675px;top:602px;" width="16" height="16" viewBox="0 0 16 16"><rect x="0.5" y="1" width="5.5" height="5.5" fill="#c5c5c5"/><rect x="0.5" y="10" width="5.5" height="5.5" fill="#c5c5c5"/><path d="M1.8 3.75H4.7M3.25 2.3V5.2M1.8 12.75H4.7M3.25 11.3V14.2" stroke="#2d2d30" stroke-width="1"/><path d="M7 1.5H11M7 3.5H11M7 5.5H11M7 7.5H11M7 9.5H11M7 12.5H11M7 14.5H11" stroke="#c5c5c5"/><path d="M12 3.5H14M12 5.5H14M12 7.5H14M12 9.5H14M12 14.5H14" stroke="#c5c5c5"/></svg>
<div class="a" style="left:1695px;top:599px;width:24px;height:22px;box-shadow:inset 0 0 0 1px #3399ff;"></div>
<svg class="a" style="left:1699px;top:603px;" width="16" height="15" viewBox="0 0 16 15"><rect x="0" y="0" width="7" height="7" fill="#c5c5c5"/><path d="M1.5 6L3.5 1L5.5 6M2.3 4.2H4.7" fill="none" stroke="#2d2d30" stroke-width="1.1"/><path d="M1 9.5H6L1 14H6.5" fill="none" stroke="#c5c5c5" stroke-width="1.6"/><path d="M11 3V9" stroke="#75beff" stroke-width="2.6"/><path d="M7.5 8.5H14.5L11 12.5Z" fill="#75beff"/></svg>
<div class="a" style="left:1721px;top:601px;width:1px;height:20px;background:#46464a;"></div>
<div class="a" style="left:1724px;top:599px;width:24px;height:22px;box-shadow:inset 0 0 0 1px #3399ff;"></div>
<svg class="a" style="left:1726px;top:603px;" width="17" height="15" viewBox="0 0 17 15"><path d="M4.5 3V0.5H11.5L14.5 3.5V13.5H7" fill="none" stroke="#c5c5c5"/><path d="M11.5 0L15.5 4" stroke="#f1f1f1" stroke-dasharray="1 1"/><circle cx="4" cy="6.5" r="3.2" fill="#c5c5c5"/><rect x="3.2" y="2.5" width="1.6" height="4" fill="#2d2d30"/><rect x="3" y="8.5" width="2" height="5.5" fill="#c5c5c5"/><path d="M0.5 4L1.5 3M0.5 9.5L1.5 10.5" stroke="#f1f1f1" stroke-width=".8"/></svg>
<svg class="a" style="left:1750px;top:602px;" width="15" height="16" viewBox="0 0 15 16"><path d="M5.5 0.5H13.5L9 6.5H13.5L3.5 15.5L6.5 8.5H2.5Z" fill="#f5b770"/><path d="M5.5 0.5L1 9M13.5 6.5L4 15.5" stroke="#f1f1f1" stroke-width="1" stroke-dasharray="1.2 0.8"/></svg>
<div class="a" style="left:1773px;top:601px;width:1px;height:20px;background:#46464a;"></div>
<svg class="a" style="left:1778px;top:602px;" width="17" height="16" viewBox="0 0 17 16"><path d="M11 0.5L15.5 2.5L16.5 7L13.5 10.5L9.5 10L3 16H0.5V13.5L7 7L6.5 3.5Z" fill="#6e6e6e"/><path d="M10 3.5L12.5 6" stroke="#555" stroke-width="2"/></svg>
<svg class="a" style="left:1903px;top:583px;" width="6" height="3" viewBox="0 0 6 3"><path d="M0 0H6L3.0 3.0Z" fill="#f1f1f1"/></svg>
<div class="a" style="left:1669px;top:624px;width:15px;height:305px;background:#2d2d30;"></div>
<svg class="a" style="left:1672px;top:629px;" width="9" height="9" viewBox="0 0 9 9"><rect x="0.5" y="0.5" width="8" height="8" fill="#1e1e1e" stroke="#f1f1f1"/><path d="M2 4.5H7M4.5 2V7" stroke="#f1f1f1"/></svg>
<svg class="a" style="left:1672px;top:667px;" width="9" height="9" viewBox="0 0 9 9"><rect x="0.5" y="0.5" width="8" height="8" fill="#1e1e1e" stroke="#f1f1f1"/><path d="M2 4.5H7M4.5 2V7" stroke="#f1f1f1"/></svg>
<svg class="a" style="left:1672px;top:705px;" width="9" height="9" viewBox="0 0 9 9"><rect x="0.5" y="0.5" width="8" height="8" fill="#1e1e1e" stroke="#f1f1f1"/><path d="M2 4.5H7M4.5 2V7" stroke="#f1f1f1"/></svg>
<svg class="a" style="left:1899px;top:629px;" width="9" height="5" viewBox="0 0 9 5"><path d="M0 5H9L4.5 0Z" fill="#999"/></svg>
<svg class="a" style="left:1899px;top:926px;" width="9" height="5" viewBox="0 0 9 5"><path d="M0 0H9L4.5 5Z" fill="#999"/></svg>
<div class="a" style="left:644px;top:844px;width:1px;height:20px;background:#46464a;"></div>
<div class="a" style="left:674px;top:844px;width:1px;height:20px;background:#46464a;"></div>
<div class="a" style="left:726px;top:844px;width:1px;height:20px;background:#46464a;"></div>
<div class="a" style="left:756px;top:844px;width:1px;height:20px;background:#46464a;"></div>
<svg class="a" style="left:652px;top:845px;" width="14" height="14" viewBox="0 0 14 14"><path d="M5 1L3 3L5 5M3 3H6V7" fill="none" stroke="#555" stroke-width="1.2"/><rect x="2" y="8" width="10" height="2" fill="#555"/><rect x="2" y="11" width="10" height="2" fill="#555"/></svg>
<svg class="a" style="left:683px;top:845px;" width="14" height="14" viewBox="0 0 14 14"><path d="M5 0.5L2.5 3L5 5.5" fill="none" stroke="#555" stroke-width="1.2"/><rect x="3" y="2.5" width="9" height="1" fill="#555"/><rect x="1" y="7" width="11" height="1.5" fill="#555"/><rect x="1" y="10" width="11" height="1.5" fill="#555"/><rect x="1" y="13" width="11" height="1" fill="#555"/></svg>
<svg class="a" style="left:705px;top:845px;" width="14" height="14" viewBox="0 0 14 14"><path d="M2 0.5L4.5 3L2 5.5" fill="none" stroke="#555" stroke-width="1.2"/><rect x="1" y="2.5" width="3" height="1" fill="#555"/><rect x="1" y="7" width="11" height="1.5" fill="#555"/><rect x="1" y="10" width="11" height="1.5" fill="#555"/><rect x="1" y="13" width="11" height="1" fill="#555"/></svg>
<svg class="a" style="left:734px;top:845px;" width="14" height="14" viewBox="0 0 14 14"><path d="M1 1L4 4M4 1L1 4" stroke="#555"/><rect x="5" y="1.5" width="9" height="1.5" fill="#555"/><rect x="1" y="5.5" width="13" height="1.5" fill="#555"/><rect x="1" y="9" width="13" height="1.5" fill="#555"/><rect x="1" y="12.5" width="13" height="1.5" fill="#555"/></svg>
<svg class="a" style="left:763px;top:845px;" width="15" height="14" viewBox="0 0 15 14"><text x="0" y="6" font-family="Liberation Sans" font-size="7" fill="#d0d0d0">ab</text><text x="0" y="13" font-family="Liberation Sans" font-size="7" fill="#d0d0d0">c</text><path d="M13.5 4V9.5H6M8.5 7L6 9.5L8.5 12" fill="none" stroke="#d0d0d0" stroke-width="1.4"/></svg>
<div class="a" style="left:1026px;top:844px;width:1px;height:19px;background:#46464a;"></div>
<div class="a" style="left:1100px;top:844px;width:1px;height:19px;background:#46464a;"></div>
<div class="a" style="left:1174px;top:844px;width:1px;height:19px;background:#46464a;"></div>
<div class="a" style="left:1248px;top:844px;width:1px;height:19px;background:#46464a;"></div>
<div class="a" style="left:1279px;top:844px;width:1px;height:19px;background:#46464a;"></div>
<svg class="a" style="left:1033px;top:845px;" width="16" height="16" viewBox="0 0 16 16"><circle cx="8" cy="8" r="7.5" fill="#e51400" stroke="#f6f6f6" stroke-width="1"/><path d="M5 5L11 11M11 5L5 11" stroke="#fff" stroke-width="2"/></svg>
<svg class="a" style="left:1107px;top:845px;" width="17" height="16" viewBox="0 0 17 16"><path d="M8.5 0.5L16.5 15.5H0.5Z" fill="#ffcc00" stroke="#f6f6f6" stroke-width="0.8"/><rect x="7.6" y="5" width="1.8" height="6" fill="#000"/><rect x="7.6" y="12" width="1.8" height="1.8" fill="#000"/></svg>
<svg class="a" style="left:1181px;top:845px;" width="16" height="16" viewBox="0 0 16 16"><circle cx="8" cy="8" r="7.5" fill="#1ba1e2" stroke="#f6f6f6" stroke-width="1"/><rect x="6.8" y="6.5" width="2.4" height="6.5" fill="#fff"/><circle cx="8" cy="4.2" r="1.3" fill="#fff"/></svg>
<svg class="a" style="left:1256px;top:846px;" width="16" height="15" viewBox="0 0 16 15"><path d="M1 1L6 6M6 1L1 6" stroke="#f48771" stroke-width="1.8"/><path d="M6 7H15L11.5 10.5V15H9.5V10.5Z" fill="#999"/></svg>
<svg class="a" style="left:907px;top:870px;" width="6" height="6" viewBox="0 0 6 6"><rect x="0" y="0" width="4" height="1" fill="#999"/><rect x="3" y="0" width="1" height="4" fill="#999"/><rect x="1" y="2" width="1" height="1" fill="#999"/><rect x="4" y="4" width="1" height="2" fill="#999"/></svg>
<svg class="a" style="left:952px;top:875px;" width="8" height="4" viewBox="0 0 8 4"><path d="M0 0H8L4.0 4.0Z" fill="#d0d0d0"/></svg>
<svg class="a" style="left:4px;top:1014px;" width="17" height="12" viewBox="0 0 17 12"><path d="M4.5 0.5H16L12.5 11.5H1Z" fill="none" stroke="#fff" stroke-width="1.3"/></svg>
<svg class="a" style="left:1150px;top:1012px;" width="14" height="14" viewBox="0 0 14 14"><path d="M0 3H4M2 0V5" stroke="#e8e8e8"/><path d="M4.5 3.5H13.5V13.5H3.5V5" fill="none" stroke="#e8e8e8" stroke-dasharray="1 1"/></svg>
<svg class="a" style="left:1310px;top:1012px;" width="14" height="14" viewBox="0 0 14 14"><path d="M5.5 3.5H13.5V13.5H5.5V5" fill="none" stroke="#e8e8e8" stroke-dasharray="1 1"/><path d="M8 2H12M10 0.5L12 2L10 3.5M12.5 0V4" fill="none" stroke="#e8e8e8"/><path d="M0 8H5M2.5 9V13M1 11.5L2.5 13L4 11.5M0 13.5H5" fill="none" stroke="#e8e8e8"/></svg>
<svg class="a" style="left:1732px;top:1014px;" width="10" height="11" viewBox="0 0 10 11"><path d="M5 11V1.5M1 5L5 1L9 5" fill="none" stroke="#e0d8c8" stroke-width="1.6"/></svg>
<svg class="a" style="left:1853px;top:1017px;" width="8" height="4" viewBox="0 0 8 4"><path d="M0 4H8L4 0Z" fill="#fff"/></svg>
<svg class="a" style="left:1882px;top:1012px;" width="22" height="16" viewBox="0 0 22 16"><path d="M2 11H12C10.5 9.5 10.5 8 10.5 6C10.5 3 9 1.5 7 1.5C5 1.5 3.5 3 3.5 6C3.5 8 3.5 9.5 2 11Z" fill="#c8c8c8"/><circle cx="7" cy="12.5" r="1.5" fill="#c8c8c8"/><circle cx="14" cy="11.5" r="6" fill="#e51400"/><text x="14" y="15.5" font-family="Liberation Sans" font-size="10" fill="#fff" text-anchor="middle">2</text></svg>
<svg class="a" style="left:260px;top:122px;" width="15" height="14" viewBox="0 0 15 14"><rect x="0.5" y="0.5" width="13" height="13" fill="none" stroke="#c8c8c8" stroke-width=".6"/><rect x="6" y="1" width="7" height="6" fill="#f0c030" stroke="#c89010" stroke-width=".6"/><rect x="1" y="6" width="4" height="5" fill="#c8281e"/><rect x="6" y="9" width="6" height="4" fill="#4a8ad8"/></svg>
<svg class="a" style="left:875px;top:128px;" width="11" height="5" viewBox="0 0 11 5"><rect x="0.5" y="0.5" width="10" height="4" rx="1.5" fill="#f0eee8" stroke="#4a4e5a"/></svg>
<svg class="a" style="left:909px;top:123px;" width="11" height="10" viewBox="0 0 11 10"><rect x="0.5" y="0.5" width="10" height="9" rx="1.5" fill="#f0eee8" stroke="#4a4e5a"/><rect x="3" y="3" width="5" height="3" fill="#b8c8da" stroke="#4a4e5a" stroke-width=".8"/></svg>
<svg class="a" style="left:943px;top:124px;" width="11" height="9" viewBox="0 0 11 9"><path d="M1.5 1.5L9.5 7.5M9.5 1.5L1.5 7.5" fill="none" stroke="#4a4e5a" stroke-width="3.6" stroke-linecap="round"/><path d="M1.5 1.5L9.5 7.5M9.5 1.5L1.5 7.5" fill="none" stroke="#f0eee8" stroke-width="1.6"/></svg>
<div class="a" style="left:508px;top:352px;width:184px;height:88px;border:1px dotted #555"></div>
<svg class="a" style="left:505px;top:349px;" width="7" height="7" viewBox="0 0 7 7"><rect x="0.5" y="0.5" width="6" height="6" rx="1.5" fill="#fff" stroke="#000" stroke-width="1.2"/></svg>
<svg class="a" style="left:505px;top:394px;" width="7" height="7" viewBox="0 0 7 7"><rect x="0.5" y="0.5" width="6" height="6" rx="1.5" fill="#fff" stroke="#000" stroke-width="1.2"/></svg>
<svg class="a" style="left:505px;top:438px;" width="7" height="7" viewBox="0 0 7 7"><rect x="0.5" y="0.5" width="6" height="6" rx="1.5" fill="#fff" stroke="#000" stroke-width="1.2"/></svg>
<svg class="a" style="left:598px;top:349px;" width="7" height="7" viewBox="0 0 7 7"><rect x="0.5" y="0.5" width="6" height="6" rx="1.5" fill="#fff" stroke="#000" stroke-width="1.2"/></svg>
<svg class="a" style="left:598px;top:438px;" width="7" height="7" viewBox="0 0 7 7"><rect x="0.5" y="0.5" width="6" height="6" rx="1.5" fill="#fff" stroke="#000" stroke-width="1.2"/></svg>
<svg class="a" style="left:690px;top:349px;" width="7" height="7" viewBox="0 0 7 7"><rect x="0.5" y="0.5" width="6" height="6" rx="1.5" fill="#fff" stroke="#000" stroke-width="1.2"/></svg>
<svg class="a" style="left:690px;top:394px;" width="7" height="7" viewBox="0 0 7 7"><rect x="0.5" y="0.5" width="6" height="6" rx="1.5" fill="#fff" stroke="#000" stroke-width="1.2"/></svg>
<svg class="a" style="left:690px;top:438px;" width="7" height="7" viewBox="0 0 7 7"><rect x="0.5" y="0.5" width="6" height="6" rx="1.5" fill="#fff" stroke="#000" stroke-width="1.2"/></svg></body></html>
